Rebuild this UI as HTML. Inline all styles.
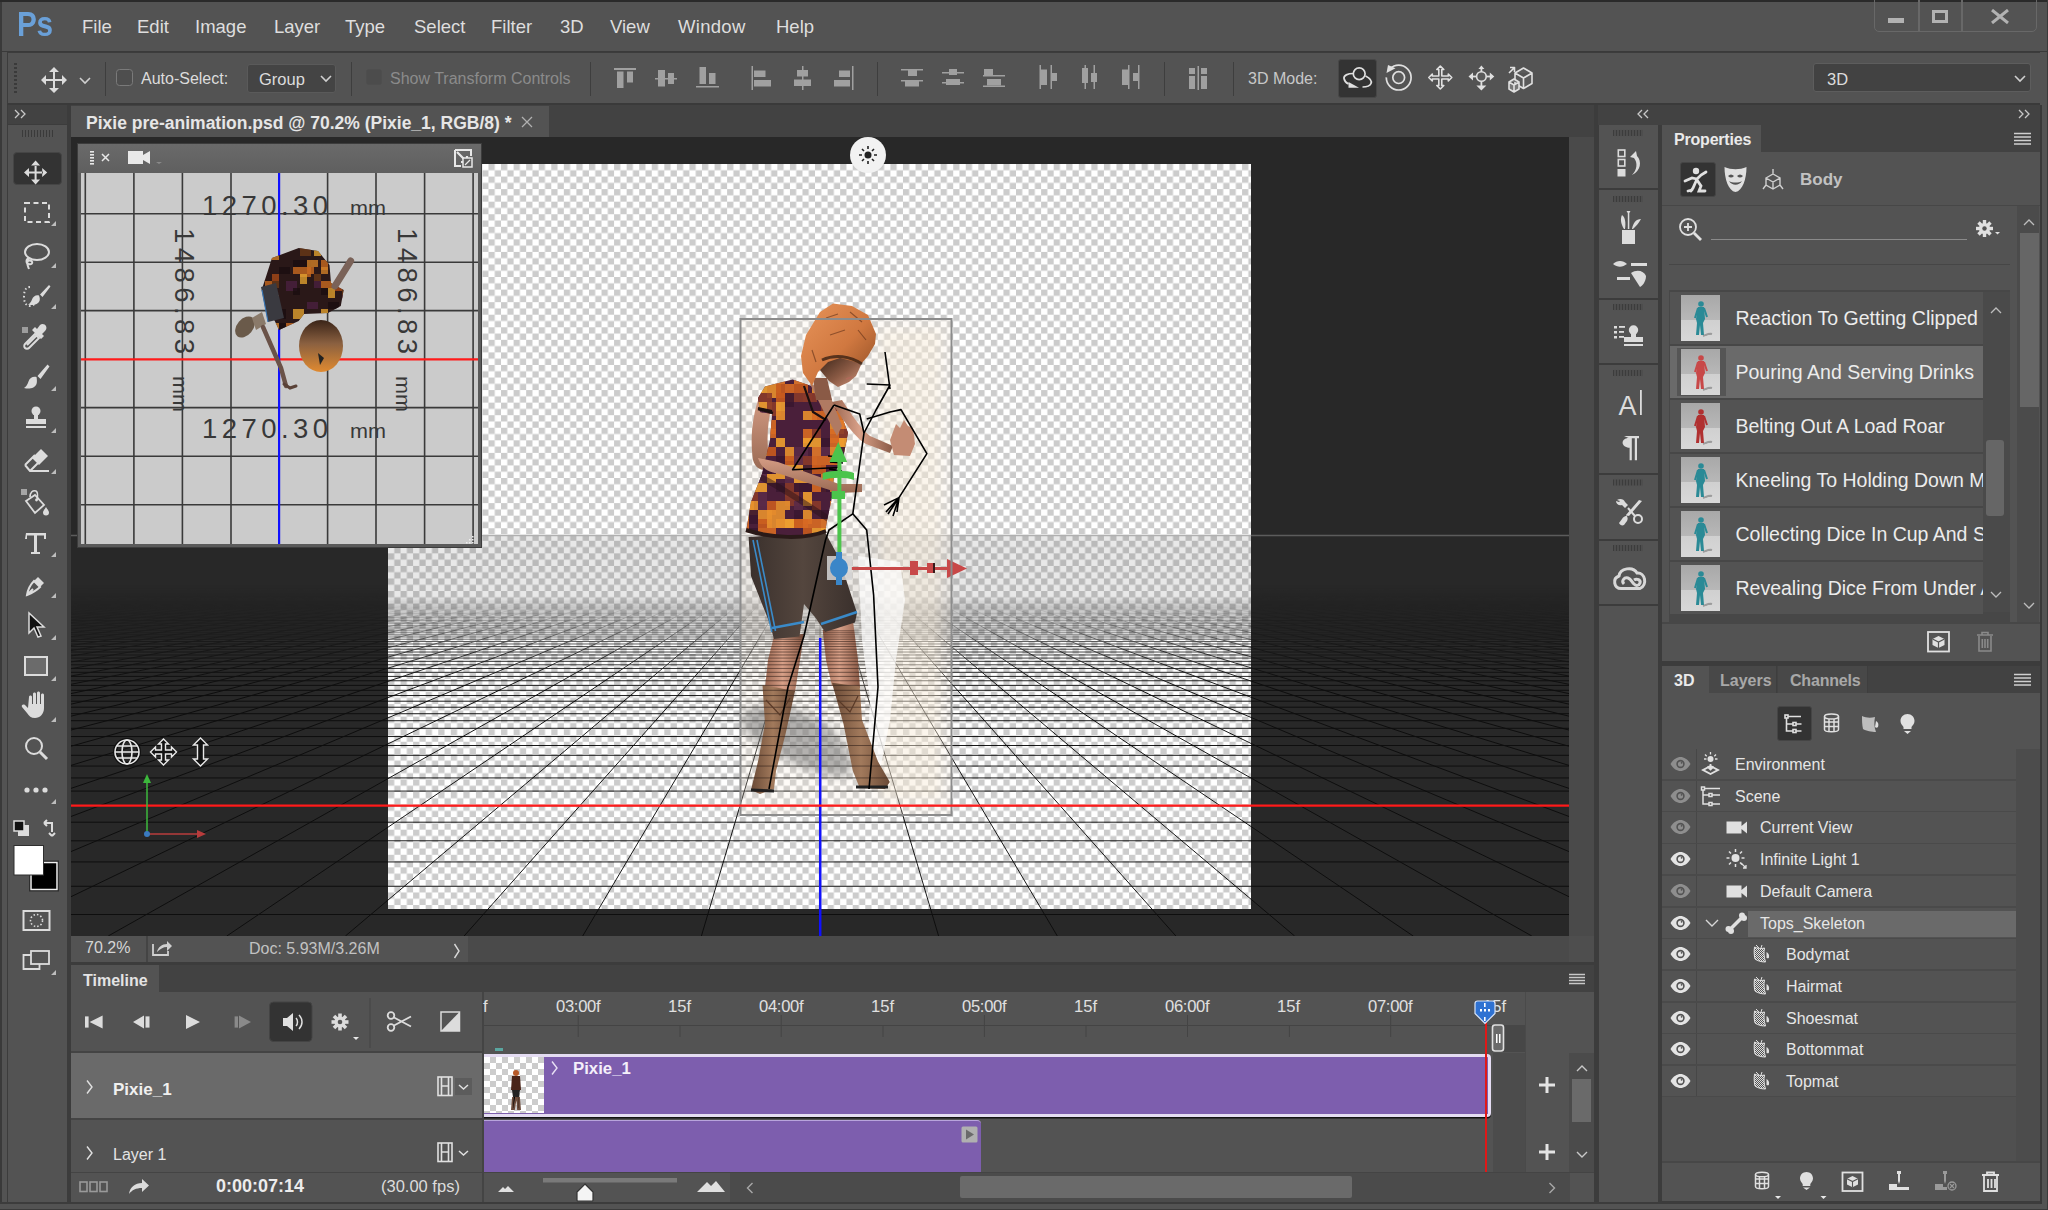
<!DOCTYPE html>
<html><head><meta charset="utf-8">
<style>
*{margin:0;padding:0;box-sizing:border-box}
html,body{width:2048px;height:1210px;overflow:hidden;background:#535353;font-family:"Liberation Sans",sans-serif;color:#dcdcdc}
.a{position:absolute}
.t{position:absolute;white-space:nowrap;line-height:1}
</style></head><body>
<!-- outer frame -->
<div class="a" style="left:0;top:0;width:2048px;height:1210px;background:#535353;border:1px solid #2f2f2f"></div>
<!-- menu bar -->
<div class="a" style="left:0;top:51px;width:2048px;height:1px;background:#3a3a3a"></div>
<!-- options bar -->
<div class="a" id="opt" style="left:7px;top:52px;width:2033px;height:53px;background:#535353;border-top:1px solid #3c3c3c;border-bottom:2px solid #3a3a3a;border-left:1px solid #3c3c3c"></div>
<!-- left toolbox -->
<div class="a" style="left:0;top:105px;width:71px;height:1105px;background:#535353"></div>
<div class="a" style="left:0;top:0;width:1.5px;height:1210px;background:#3a3a3a"></div>
<div class="a" style="left:6.5px;top:105px;width:1.5px;height:1098px;background:#3c3c3c"></div>
<div class="a" style="left:67px;top:105px;width:4px;height:1098px;background:#3c3c3c"></div>
<div class="a" style="left:8px;top:124px;width:59px;height:1px;background:#3c3c3c"></div>
<div class="a" style="left:0;top:1202px;width:2048px;height:1.5px;background:#3c3c3c"></div>
<div class="a" style="left:0;top:1208.5px;width:2048px;height:1.5px;background:#3a3a3a"></div>
<div class="a" style="left:8px;top:105px;width:59px;height:19px;background:#424242"></div>
<!-- doc tab strip -->
<div class="a" style="left:71px;top:105px;width:1524px;height:32px;background:#424242"></div>
<div class="a" style="left:71px;top:106px;width:478px;height:31px;background:#535353"></div>
<!-- canvas area -->
<div class="a" id="canvas" style="left:71px;top:137px;width:1498px;height:799px;background:#282828;overflow:hidden"></div>
<!--SEC3-->
<svg class="a" style="left:71px;top:137px" width="1498" height="799" viewBox="71 137 1498 799">
<defs>
<pattern id="chk" x="388" y="164" width="12.56" height="12.56" patternUnits="userSpaceOnUse">
<rect width="12.56" height="12.56" fill="#ffffff"/><rect x="0" y="0" width="6.28" height="6.28" fill="#cccccc"/><rect x="6.28" y="6.28" width="6.28" height="6.28" fill="#cccccc"/></pattern>
<linearGradient id="fadeD" x1="0" y1="0" x2="0" y2="1" gradientUnits="objectBoundingBox">
<stop offset="0" stop-color="#262626" stop-opacity="1"/><stop offset="0.35" stop-color="#262626" stop-opacity="0.85"/><stop offset="1" stop-color="#262626" stop-opacity="0"/></linearGradient>
<linearGradient id="fadeW" x1="0" y1="0" x2="0" y2="1">
<stop offset="0" stop-color="#000" stop-opacity="0.09"/><stop offset="0.6" stop-color="#000" stop-opacity="0.09"/><stop offset="1" stop-color="#000" stop-opacity="0"/></linearGradient>
<linearGradient id="gmask" gradientUnits="userSpaceOnUse" x1="0" y1="585" x2="0" y2="690">
<stop offset="0" stop-color="#000"/><stop offset="1" stop-color="#fff"/></linearGradient>
<linearGradient id="gmask2" gradientUnits="userSpaceOnUse" x1="0" y1="596" x2="0" y2="690">
<stop offset="0" stop-color="#000"/><stop offset="0.3" stop-color="#707070"/><stop offset="0.6" stop-color="#d0d0d0"/><stop offset="1" stop-color="#fff"/></linearGradient>
<mask id="gm2" maskUnits="userSpaceOnUse" x="71" y="137" width="1498" height="799"><rect x="71" y="137" width="1498" height="799" fill="url(#gmask2)"/></mask>
<mask id="gm" maskUnits="userSpaceOnUse" x="71" y="137" width="1498" height="799"><rect x="71" y="137" width="1498" height="799" fill="url(#gmask)"/></mask>
<clipPath id="cvclip"><rect x="388" y="164" width="863" height="745"/></clipPath>
</defs>
<rect x="71" y="137" width="1498" height="799" fill="#282828"/>
<g mask="url(#gm)"><path d="M71 914.50H1569M71 886.27H1569M71 861.95H1569M71 840.79H1569M71 822.20H1569M71 805.75H1569M71 791.08H1569M71 777.93H1569M71 766.06H1569M71 755.30H1569M71 745.50H1569M71 736.54H1569M71 728.31H1569M71 720.73H1569M71 713.72H1569M71 707.23H1569M71 701.19H1569M71 695.56H1569M71 690.30H1569M71 685.38H1569M71 680.76H1569M71 676.41H1569M71 672.32H1569M71 668.46H1569M71 664.81H1569M71 661.36H1569M71 658.09H1569M71 654.98H1569M71 652.03H1569M71 649.22H1569M71 646.54H1569M71 643.98H1569M71 641.54H1569M71 639.21H1569M71 636.98H1569M71 634.84H1569M71 632.79H1569M71 630.82H1569M71 628.94H1569M71 627.12H1569M71 625.37H1569M71 623.69H1569M71 622.08H1569M71 620.52H1569M71 619.01H1569M71 617.56H1569M71 616.15H1569M71 614.80H1569M71 613.49H1569M71 612.22H1569M71 610.99H1569M71 609.80H1569M71 608.65H1569M71 607.54H1569M71 606.45H1569M71 605.40H1569M71 604.38H1569M71 603.39H1569M71 602.43H1569M71 601.49H1569M71 600.58H1569M71 599.70H1569M71 598.84H1569M71 598.00H1569M71 597.18H1569M71 596.39H1569M71 595.61H1569M71 594.85H1569M71 594.12H1569M71 593.40H1569M71 592.70H1569M71 592.01H1569M71 591.35H1569M71 590.69H1569M71 590.05H1569M71 589.43H1569M71 588.82H1569M71 588.23H1569M71 587.65H1569M71 587.08H1569M71 586.52H1569M71 585.97H1569M71 585.44H1569M71 584.92H1569M71 584.41H1569M71 583.91H1569M71 583.42H1569M71 582.93H1569M71 582.46H1569M71 582.00H1569M71 581.55H1569M71 581.10H1569M71 580.67H1569M71 580.24H1569M71 579.82H1569M71 579.41H1569M71 579.01H1569M71 578.61H1569M71 578.22H1569M71 577.84H1569M71 577.46H1569M71 577.09H1569M71 576.73H1569M71 576.37H1569M71 576.02H1569M71 575.68H1569M71 575.34H1569M71 575.01H1569M71 574.68H1569M71 574.36H1569M71 574.04H1569M71 573.73H1569M71 573.42H1569M71 573.12H1569M71 572.83H1569M71 572.53H1569M71 572.25H1569M71 571.96H1569M71 571.68H1569M71 571.41H1569M71 571.14H1569M71 570.87H1569M71 570.61H1569M71 570.35H1569M71 570.10H1569M71 569.85H1569M71 569.60H1569M71 569.35H1569M71 569.11H1569M71 568.88H1569M71 568.64H1569M71 568.41H1569M71 568.19H1569M71 567.96H1569M71 567.74H1569M71 567.52H1569M71 567.31H1569M71 567.10H1569M71 566.89H1569M71 566.68H1569M71 566.48H1569M71 566.27H1569M71 566.08H1569M71 565.88H1569M71 565.69H1569M71 565.49H1569M71 565.31H1569M71 565.12H1569M71 564.94H1569M71 564.75H1569M71 564.57H1569M71 564.40H1569M71 564.22H1569M71 564.05H1569M71 563.88H1569M71 563.71H1569M71 563.54H1569M71 563.38H1569M71 563.21H1569M71 563.05H1569M71 562.89H1569M71 562.74H1569M71 562.58H1569M71 562.43H1569M71 562.27H1569M71 562.12H1569M71 561.98H1569M71 561.83H1569M71 561.68H1569M71 561.54H1569M71 561.40H1569M71 561.26H1569M71 561.12H1569M71 560.98H1569M71 560.84H1569M71 560.71H1569M71 560.58H1569M71 560.44H1569M71 560.31H1569M71 560.18H1569M71 560.06H1569M71 559.93H1569M71 559.81H1569M71 559.68H1569M71 559.56H1569M71 559.44H1569M71 559.32H1569M71 559.20H1569M71 559.08H1569M71 558.96H1569M71 558.85H1569M71 558.73H1569M71 558.62H1569M71 558.51H1569M71 558.40H1569M71 558.29H1569M71 558.18H1569M71 558.07H1569M71 557.96H1569M71 557.86H1569M71 557.75H1569M71 557.65H1569M71 557.55H1569M71 557.45H1569M71 557.34H1569M71 557.24H1569M71 557.15H1569M71 557.05H1569M71 556.95H1569M71 556.85H1569M71 556.76H1569M71 556.66H1569M71 556.57H1569M71 556.48H1569M71 556.38H1569M71 556.29H1569M71 556.20H1569M71 556.11H1569M71 556.02H1569M71 555.94H1569M71 555.85H1569M71 555.76H1569M71 555.68H1569M71 555.59H1569M71 555.51H1569M71 555.42H1569M71 555.34H1569M71 555.26H1569M71 555.17H1569M71 555.09H1569M71 555.01H1569M71 554.93H1569M71 554.85H1569M71 554.78H1569M71 554.70H1569M71 554.62H1569M71 554.54H1569M71 554.47H1569M71 554.39H1569M71 554.32H1569M71 554.24H1569M71 554.17H1569M71 554.10H1569M71 554.02H1569M71 553.95H1569M71 553.88H1569M71 553.81H1569M71 553.74H1569M71 553.67H1569M71 553.60H1569M71 553.53H1569M71 553.47H1569M71 553.40H1569M71 553.33H1569M71 553.26H1569M71 553.20H1569M71 553.13H1569M71 553.07H1569M71 553.00H1569M71 552.94H1569M71 552.87H1569M71 552.81H1569M71 552.75H1569M71 552.69H1569M71 552.62H1569M71 552.56H1569M71 552.50H1569M71 552.44H1569M71 552.38H1569M71 552.32H1569M71 552.26H1569M71 552.20H1569M71 552.15H1569M71 552.09H1569M71 552.03H1569M71 551.97H1569M71 551.92H1569M71 551.86H1569M71 551.80H1569M71 551.75H1569M71 551.69H1569M71 551.64H1569M71 551.58H1569M71 551.53H1569M71 551.48H1569M71 551.42H1569M71 551.37H1569M71 551.32H1569M71 551.26H1569M71 551.21H1569M71 551.16H1569M71 551.11H1569M71 551.06H1569M71 551.01H1569M71 550.96H1569M71 550.91H1569M71 550.86H1569M71 550.81H1569M71 550.76H1569M71 550.71H1569M71 550.66H1569M71 550.61H1569M71 550.57H1569M71 550.52H1569M71 550.47H1569M71 550.43H1569M71 550.38H1569M71 550.33H1569M71 550.29H1569M71 550.24H1569M71 550.20H1569M71 550.15H1569M71 550.11H1569M71 550.06H1569M71 550.02H1569M71 549.97H1569M71 549.93H1569M71 549.89H1569M71 549.84H1569M71 549.80H1569M71 549.76H1569M71 549.71H1569M71 549.67H1569M71 549.63H1569M71 549.59H1569M71 549.55H1569M71 549.51H1569M71 549.46H1569M71 549.42H1569M71 549.38H1569M71 549.34H1569M71 549.30H1569M71 549.26H1569M71 549.22H1569M71 549.18H1569M71 549.15H1569M71 549.11H1569M71 549.07H1569M71 549.03H1569M71 548.99H1569M71 548.95H1569M71 548.92H1569M71 548.88H1569M71 548.84H1569M71 548.80H1569M71 548.77H1569M71 548.73H1569M71 548.69H1569M71 548.66H1569M71 548.62H1569M71 548.58H1569M71 548.55H1569M71 548.51H1569M71 548.48H1569M71 548.44H1569M71 548.41H1569M71 548.37H1569M71 548.34H1569M71 548.30H1569M71 548.27H1569M71 548.24H1569M71 548.20H1569M71 548.17H1569M71 548.14H1569M71 548.10H1569M71 548.07H1569M71 548.04H1569M71 548.00H1569M71 547.97H1569M71 547.94H1569M71 547.91H1569M71 547.87H1569M71 547.84H1569M71 547.81H1569M71 547.78H1569M71 547.75H1569M71 547.72H1569M71 547.68H1569M71 547.65H1569M71 547.62H1569M820.0 535.6L-18162.2 936M820.0 535.6L-18043.5 936M820.0 535.6L-17924.9 936M820.0 535.6L-17806.2 936M820.0 535.6L-17687.6 936M820.0 535.6L-17569.0 936M820.0 535.6L-17450.3 936M820.0 535.6L-17331.7 936M820.0 535.6L-17213.1 936M820.0 535.6L-17094.4 936M820.0 535.6L-16975.8 936M820.0 535.6L-16857.1 936M820.0 535.6L-16738.5 936M820.0 535.6L-16619.9 936M820.0 535.6L-16501.2 936M820.0 535.6L-16382.6 936M820.0 535.6L-16263.9 936M820.0 535.6L-16145.3 936M820.0 535.6L-16026.7 936M820.0 535.6L-15908.0 936M820.0 535.6L-15789.4 936M820.0 535.6L-15670.8 936M820.0 535.6L-15552.1 936M820.0 535.6L-15433.5 936M820.0 535.6L-15314.8 936M820.0 535.6L-15196.2 936M820.0 535.6L-15077.6 936M820.0 535.6L-14958.9 936M820.0 535.6L-14840.3 936M820.0 535.6L-14721.6 936M820.0 535.6L-14603.0 936M820.0 535.6L-14484.4 936M820.0 535.6L-14365.7 936M820.0 535.6L-14247.1 936M820.0 535.6L-14128.5 936M820.0 535.6L-14009.8 936M820.0 535.6L-13891.2 936M820.0 535.6L-13772.5 936M820.0 535.6L-13653.9 936M820.0 535.6L-13535.3 936M820.0 535.6L-13416.6 936M820.0 535.6L-13298.0 936M820.0 535.6L-13179.3 936M820.0 535.6L-13060.7 936M820.0 535.6L-12942.1 936M820.0 535.6L-12823.4 936M820.0 535.6L-12704.8 936M820.0 535.6L-12586.2 936M820.0 535.6L-12467.5 936M820.0 535.6L-12348.9 936M820.0 535.6L-12230.2 936M820.0 535.6L-12111.6 936M820.0 535.6L-11993.0 936M820.0 535.6L-11874.3 936M820.0 535.6L-11755.7 936M820.0 535.6L-11637.0 936M820.0 535.6L-11518.4 936M820.0 535.6L-11399.8 936M820.0 535.6L-11281.1 936M820.0 535.6L-11162.5 936M820.0 535.6L-11043.9 936M820.0 535.6L-10925.2 936M820.0 535.6L-10806.6 936M820.0 535.6L-10687.9 936M820.0 535.6L-10569.3 936M820.0 535.6L-10450.7 936M820.0 535.6L-10332.0 936M820.0 535.6L-10213.4 936M820.0 535.6L-10094.7 936M820.0 535.6L-9976.1 936M820.0 535.6L-9857.5 936M820.0 535.6L-9738.8 936M820.0 535.6L-9620.2 936M820.0 535.6L-9501.6 936M820.0 535.6L-9382.9 936M820.0 535.6L-9264.3 936M820.0 535.6L-9145.6 936M820.0 535.6L-9027.0 936M820.0 535.6L-8908.4 936M820.0 535.6L-8789.7 936M820.0 535.6L-8671.1 936M820.0 535.6L-8552.4 936M820.0 535.6L-8433.8 936M820.0 535.6L-8315.2 936M820.0 535.6L-8196.5 936M820.0 535.6L-8077.9 936M820.0 535.6L-7959.3 936M820.0 535.6L-7840.6 936M820.0 535.6L-7722.0 936M820.0 535.6L-7603.3 936M820.0 535.6L-7484.7 936M820.0 535.6L-7366.1 936M820.0 535.6L-7247.4 936M820.0 535.6L-7128.8 936M820.0 535.6L-7010.1 936M820.0 535.6L-6891.5 936M820.0 535.6L-6772.9 936M820.0 535.6L-6654.2 936M820.0 535.6L-6535.6 936M820.0 535.6L-6416.9 936M820.0 535.6L-6298.3 936M820.0 535.6L-6179.7 936M820.0 535.6L-6061.0 936M820.0 535.6L-5942.4 936M820.0 535.6L-5823.8 936M820.0 535.6L-5705.1 936M820.0 535.6L-5586.5 936M820.0 535.6L-5467.8 936M820.0 535.6L-5349.2 936M820.0 535.6L-5230.6 936M820.0 535.6L-5111.9 936M820.0 535.6L-4993.3 936M820.0 535.6L-4874.6 936M820.0 535.6L-4756.0 936M820.0 535.6L-4637.4 936M820.0 535.6L-4518.7 936M820.0 535.6L-4400.1 936M820.0 535.6L-4281.5 936M820.0 535.6L-4162.8 936M820.0 535.6L-4044.2 936M820.0 535.6L-3925.5 936M820.0 535.6L-3806.9 936M820.0 535.6L-3688.3 936M820.0 535.6L-3569.6 936M820.0 535.6L-3451.0 936M820.0 535.6L-3332.3 936M820.0 535.6L-3213.7 936M820.0 535.6L-3095.1 936M820.0 535.6L-2976.4 936M820.0 535.6L-2857.8 936M820.0 535.6L-2739.2 936M820.0 535.6L-2620.5 936M820.0 535.6L-2501.9 936M820.0 535.6L-2383.2 936M820.0 535.6L-2264.6 936M820.0 535.6L-2146.0 936M820.0 535.6L-2027.3 936M820.0 535.6L-1908.7 936M820.0 535.6L-1790.0 936M820.0 535.6L-1671.4 936M820.0 535.6L-1552.8 936M820.0 535.6L-1434.1 936M820.0 535.6L-1315.5 936M820.0 535.6L-1196.9 936M820.0 535.6L-1078.2 936M820.0 535.6L-959.6 936M820.0 535.6L-840.9 936M820.0 535.6L-722.3 936M820.0 535.6L-603.7 936M820.0 535.6L-485.0 936M820.0 535.6L-366.4 936M820.0 535.6L-247.7 936M820.0 535.6L-129.1 936M820.0 535.6L-10.5 936M820.0 535.6L108.2 936M820.0 535.6L226.8 936M820.0 535.6L345.4 936M820.0 535.6L464.1 936M820.0 535.6L582.7 936M820.0 535.6L701.4 936M820.0 535.6L820.0 936M820.0 535.6L938.6 936M820.0 535.6L1057.3 936M820.0 535.6L1175.9 936M820.0 535.6L1294.6 936M820.0 535.6L1413.2 936M820.0 535.6L1531.8 936M820.0 535.6L1650.5 936M820.0 535.6L1769.1 936M820.0 535.6L1887.7 936M820.0 535.6L2006.4 936M820.0 535.6L2125.0 936M820.0 535.6L2243.7 936M820.0 535.6L2362.3 936M820.0 535.6L2480.9 936M820.0 535.6L2599.6 936M820.0 535.6L2718.2 936M820.0 535.6L2836.9 936M820.0 535.6L2955.5 936M820.0 535.6L3074.1 936M820.0 535.6L3192.8 936M820.0 535.6L3311.4 936M820.0 535.6L3430.0 936M820.0 535.6L3548.7 936M820.0 535.6L3667.3 936M820.0 535.6L3786.0 936M820.0 535.6L3904.6 936M820.0 535.6L4023.2 936M820.0 535.6L4141.9 936M820.0 535.6L4260.5 936M820.0 535.6L4379.2 936M820.0 535.6L4497.8 936M820.0 535.6L4616.4 936M820.0 535.6L4735.1 936M820.0 535.6L4853.7 936M820.0 535.6L4972.3 936M820.0 535.6L5091.0 936M820.0 535.6L5209.6 936M820.0 535.6L5328.3 936M820.0 535.6L5446.9 936M820.0 535.6L5565.5 936M820.0 535.6L5684.2 936M820.0 535.6L5802.8 936M820.0 535.6L5921.5 936M820.0 535.6L6040.1 936M820.0 535.6L6158.7 936M820.0 535.6L6277.4 936M820.0 535.6L6396.0 936M820.0 535.6L6514.6 936M820.0 535.6L6633.3 936M820.0 535.6L6751.9 936M820.0 535.6L6870.6 936M820.0 535.6L6989.2 936M820.0 535.6L7107.8 936M820.0 535.6L7226.5 936M820.0 535.6L7345.1 936M820.0 535.6L7463.8 936M820.0 535.6L7582.4 936M820.0 535.6L7701.0 936M820.0 535.6L7819.7 936M820.0 535.6L7938.3 936M820.0 535.6L8056.9 936M820.0 535.6L8175.6 936M820.0 535.6L8294.2 936M820.0 535.6L8412.9 936M820.0 535.6L8531.5 936M820.0 535.6L8650.1 936M820.0 535.6L8768.8 936M820.0 535.6L8887.4 936M820.0 535.6L9006.1 936M820.0 535.6L9124.7 936M820.0 535.6L9243.3 936M820.0 535.6L9362.0 936M820.0 535.6L9480.6 936M820.0 535.6L9599.3 936M820.0 535.6L9717.9 936M820.0 535.6L9836.5 936M820.0 535.6L9955.2 936M820.0 535.6L10073.8 936M820.0 535.6L10192.4 936M820.0 535.6L10311.1 936M820.0 535.6L10429.7 936M820.0 535.6L10548.4 936M820.0 535.6L10667.0 936M820.0 535.6L10785.6 936M820.0 535.6L10904.3 936M820.0 535.6L11022.9 936M820.0 535.6L11141.6 936M820.0 535.6L11260.2 936M820.0 535.6L11378.8 936M820.0 535.6L11497.5 936M820.0 535.6L11616.1 936M820.0 535.6L11734.7 936M820.0 535.6L11853.4 936M820.0 535.6L11972.0 936M820.0 535.6L12090.7 936M820.0 535.6L12209.3 936M820.0 535.6L12327.9 936M820.0 535.6L12446.6 936M820.0 535.6L12565.2 936M820.0 535.6L12683.9 936M820.0 535.6L12802.5 936M820.0 535.6L12921.1 936M820.0 535.6L13039.8 936M820.0 535.6L13158.4 936M820.0 535.6L13277.0 936M820.0 535.6L13395.7 936M820.0 535.6L13514.3 936M820.0 535.6L13633.0 936M820.0 535.6L13751.6 936M820.0 535.6L13870.2 936M820.0 535.6L13988.9 936M820.0 535.6L14107.5 936M820.0 535.6L14226.2 936M820.0 535.6L14344.8 936M820.0 535.6L14463.4 936M820.0 535.6L14582.1 936M820.0 535.6L14700.7 936M820.0 535.6L14819.3 936M820.0 535.6L14938.0 936M820.0 535.6L15056.6 936M820.0 535.6L15175.3 936M820.0 535.6L15293.9 936M820.0 535.6L15412.5 936M820.0 535.6L15531.2 936M820.0 535.6L15649.8 936M820.0 535.6L15768.5 936M820.0 535.6L15887.1 936M820.0 535.6L16005.7 936M820.0 535.6L16124.4 936M820.0 535.6L16243.0 936M820.0 535.6L16361.6 936M820.0 535.6L16480.3 936M820.0 535.6L16598.9 936M820.0 535.6L16717.6 936M820.0 535.6L16836.2 936M820.0 535.6L16954.8 936M820.0 535.6L17073.5 936M820.0 535.6L17192.1 936M820.0 535.6L17310.8 936M820.0 535.6L17429.4 936M820.0 535.6L17548.0 936M820.0 535.6L17666.7 936M820.0 535.6L17785.3 936M820.0 535.6L17903.9 936M820.0 535.6L18022.6 936M820.0 535.6L18141.2 936M820.0 535.6L18259.9 936M820.0 535.6L18378.5 936M820.0 535.6L18497.1 936M820.0 535.6L18615.8 936M820.0 535.6L18734.4 936M820.0 535.6L18853.1 936M820.0 535.6L18971.7 936M820.0 535.6L19090.3 936M820.0 535.6L19209.0 936M820.0 535.6L19327.6 936M820.0 535.6L19446.2 936M820.0 535.6L19564.9 936M820.0 535.6L19683.5 936M820.0 535.6L19802.2 936" stroke="#0e0e0e" stroke-width="1" fill="none"/></g>
<rect x="388" y="164" width="863" height="745" fill="url(#chk)"/>
<g clip-path="url(#cvclip)">
<rect x="388" y="535.6" width="863" height="110" fill="url(#fadeW)"/>
<g mask="url(#gm2)"><path d="M71 914.50H1569M71 886.27H1569M71 861.95H1569M71 840.79H1569M71 822.20H1569M71 805.75H1569M71 791.08H1569M71 777.93H1569M71 766.06H1569M71 755.30H1569M71 745.50H1569M71 736.54H1569M71 728.31H1569M71 720.73H1569M71 713.72H1569M71 707.23H1569M71 701.19H1569M71 695.56H1569M71 690.30H1569M71 685.38H1569M71 680.76H1569M71 676.41H1569M71 672.32H1569M71 668.46H1569M71 664.81H1569M71 661.36H1569M71 658.09H1569M71 654.98H1569M71 652.03H1569M71 649.22H1569M71 646.54H1569M71 643.98H1569M71 641.54H1569M71 639.21H1569M71 636.98H1569M71 634.84H1569M71 632.79H1569M71 630.82H1569M71 628.94H1569M71 627.12H1569M71 625.37H1569M71 623.69H1569M71 622.08H1569M71 620.52H1569M71 619.01H1569M71 617.56H1569M71 616.15H1569M71 614.80H1569M71 613.49H1569M71 612.22H1569M71 610.99H1569M71 609.80H1569M71 608.65H1569M71 607.54H1569M71 606.45H1569M71 605.40H1569M71 604.38H1569M71 603.39H1569M71 602.43H1569M71 601.49H1569M71 600.58H1569M71 599.70H1569M71 598.84H1569M71 598.00H1569M71 597.18H1569M71 596.39H1569M71 595.61H1569M71 594.85H1569M71 594.12H1569M71 593.40H1569M71 592.70H1569M71 592.01H1569M71 591.35H1569M71 590.69H1569M71 590.05H1569M71 589.43H1569M71 588.82H1569M71 588.23H1569M71 587.65H1569M71 587.08H1569M71 586.52H1569M71 585.97H1569M71 585.44H1569M71 584.92H1569M71 584.41H1569M71 583.91H1569M71 583.42H1569M71 582.93H1569M71 582.46H1569M71 582.00H1569M71 581.55H1569M71 581.10H1569M71 580.67H1569M71 580.24H1569M71 579.82H1569M71 579.41H1569M71 579.01H1569M71 578.61H1569M71 578.22H1569M71 577.84H1569M71 577.46H1569M71 577.09H1569M71 576.73H1569M71 576.37H1569M71 576.02H1569M71 575.68H1569M71 575.34H1569M71 575.01H1569M71 574.68H1569M71 574.36H1569M71 574.04H1569M71 573.73H1569M71 573.42H1569M71 573.12H1569M71 572.83H1569M71 572.53H1569M71 572.25H1569M71 571.96H1569M71 571.68H1569M71 571.41H1569M71 571.14H1569M71 570.87H1569M71 570.61H1569M71 570.35H1569M71 570.10H1569M71 569.85H1569M71 569.60H1569M71 569.35H1569M71 569.11H1569M71 568.88H1569M71 568.64H1569M71 568.41H1569M71 568.19H1569M71 567.96H1569M71 567.74H1569M71 567.52H1569M71 567.31H1569M71 567.10H1569M71 566.89H1569M71 566.68H1569M71 566.48H1569M71 566.27H1569M71 566.08H1569M71 565.88H1569M71 565.69H1569M71 565.49H1569M71 565.31H1569M71 565.12H1569M71 564.94H1569M71 564.75H1569M71 564.57H1569M71 564.40H1569M71 564.22H1569M71 564.05H1569M71 563.88H1569M71 563.71H1569M71 563.54H1569M71 563.38H1569M71 563.21H1569M71 563.05H1569M71 562.89H1569M71 562.74H1569M71 562.58H1569M71 562.43H1569M71 562.27H1569M71 562.12H1569M71 561.98H1569M71 561.83H1569M71 561.68H1569M71 561.54H1569M71 561.40H1569M71 561.26H1569M71 561.12H1569M71 560.98H1569M71 560.84H1569M71 560.71H1569M71 560.58H1569M71 560.44H1569M71 560.31H1569M71 560.18H1569M71 560.06H1569M71 559.93H1569M71 559.81H1569M71 559.68H1569M71 559.56H1569M71 559.44H1569M71 559.32H1569M71 559.20H1569M71 559.08H1569M71 558.96H1569M71 558.85H1569M71 558.73H1569M71 558.62H1569M71 558.51H1569M71 558.40H1569M71 558.29H1569M71 558.18H1569M71 558.07H1569M71 557.96H1569M71 557.86H1569M71 557.75H1569M71 557.65H1569M71 557.55H1569M71 557.45H1569M71 557.34H1569M71 557.24H1569M71 557.15H1569M71 557.05H1569M71 556.95H1569M71 556.85H1569M71 556.76H1569M71 556.66H1569M71 556.57H1569M71 556.48H1569M71 556.38H1569M71 556.29H1569M71 556.20H1569M71 556.11H1569M71 556.02H1569M71 555.94H1569M71 555.85H1569M71 555.76H1569M71 555.68H1569M71 555.59H1569M71 555.51H1569M71 555.42H1569M71 555.34H1569M71 555.26H1569M71 555.17H1569M71 555.09H1569M71 555.01H1569M71 554.93H1569M71 554.85H1569M71 554.78H1569M71 554.70H1569M71 554.62H1569M71 554.54H1569M71 554.47H1569M71 554.39H1569M71 554.32H1569M71 554.24H1569M71 554.17H1569M71 554.10H1569M71 554.02H1569M71 553.95H1569M71 553.88H1569M71 553.81H1569M71 553.74H1569M71 553.67H1569M71 553.60H1569M71 553.53H1569M71 553.47H1569M71 553.40H1569M71 553.33H1569M71 553.26H1569M71 553.20H1569M71 553.13H1569M71 553.07H1569M71 553.00H1569M71 552.94H1569M71 552.87H1569M71 552.81H1569M71 552.75H1569M71 552.69H1569M71 552.62H1569M71 552.56H1569M71 552.50H1569M71 552.44H1569M71 552.38H1569M71 552.32H1569M71 552.26H1569M71 552.20H1569M71 552.15H1569M71 552.09H1569M71 552.03H1569M71 551.97H1569M71 551.92H1569M71 551.86H1569M71 551.80H1569M71 551.75H1569M71 551.69H1569M71 551.64H1569M71 551.58H1569M71 551.53H1569M71 551.48H1569M71 551.42H1569M71 551.37H1569M71 551.32H1569M71 551.26H1569M71 551.21H1569M71 551.16H1569M71 551.11H1569M71 551.06H1569M71 551.01H1569M71 550.96H1569M71 550.91H1569M71 550.86H1569M71 550.81H1569M71 550.76H1569M71 550.71H1569M71 550.66H1569M71 550.61H1569M71 550.57H1569M71 550.52H1569M71 550.47H1569M71 550.43H1569M71 550.38H1569M71 550.33H1569M71 550.29H1569M71 550.24H1569M71 550.20H1569M71 550.15H1569M71 550.11H1569M71 550.06H1569M71 550.02H1569M71 549.97H1569M71 549.93H1569M71 549.89H1569M71 549.84H1569M71 549.80H1569M71 549.76H1569M71 549.71H1569M71 549.67H1569M71 549.63H1569M71 549.59H1569M71 549.55H1569M71 549.51H1569M71 549.46H1569M71 549.42H1569M71 549.38H1569M71 549.34H1569M71 549.30H1569M71 549.26H1569M71 549.22H1569M71 549.18H1569M71 549.15H1569M71 549.11H1569M71 549.07H1569M71 549.03H1569M71 548.99H1569M71 548.95H1569M71 548.92H1569M71 548.88H1569M71 548.84H1569M71 548.80H1569M71 548.77H1569M71 548.73H1569M71 548.69H1569M71 548.66H1569M71 548.62H1569M71 548.58H1569M71 548.55H1569M71 548.51H1569M71 548.48H1569M71 548.44H1569M71 548.41H1569M71 548.37H1569M71 548.34H1569M71 548.30H1569M71 548.27H1569M71 548.24H1569M71 548.20H1569M71 548.17H1569M71 548.14H1569M71 548.10H1569M71 548.07H1569M71 548.04H1569M71 548.00H1569M71 547.97H1569M71 547.94H1569M71 547.91H1569M71 547.87H1569M71 547.84H1569M71 547.81H1569M71 547.78H1569M71 547.75H1569M71 547.72H1569M71 547.68H1569M71 547.65H1569M71 547.62H1569M820.0 535.6L-18162.2 936M820.0 535.6L-18043.5 936M820.0 535.6L-17924.9 936M820.0 535.6L-17806.2 936M820.0 535.6L-17687.6 936M820.0 535.6L-17569.0 936M820.0 535.6L-17450.3 936M820.0 535.6L-17331.7 936M820.0 535.6L-17213.1 936M820.0 535.6L-17094.4 936M820.0 535.6L-16975.8 936M820.0 535.6L-16857.1 936M820.0 535.6L-16738.5 936M820.0 535.6L-16619.9 936M820.0 535.6L-16501.2 936M820.0 535.6L-16382.6 936M820.0 535.6L-16263.9 936M820.0 535.6L-16145.3 936M820.0 535.6L-16026.7 936M820.0 535.6L-15908.0 936M820.0 535.6L-15789.4 936M820.0 535.6L-15670.8 936M820.0 535.6L-15552.1 936M820.0 535.6L-15433.5 936M820.0 535.6L-15314.8 936M820.0 535.6L-15196.2 936M820.0 535.6L-15077.6 936M820.0 535.6L-14958.9 936M820.0 535.6L-14840.3 936M820.0 535.6L-14721.6 936M820.0 535.6L-14603.0 936M820.0 535.6L-14484.4 936M820.0 535.6L-14365.7 936M820.0 535.6L-14247.1 936M820.0 535.6L-14128.5 936M820.0 535.6L-14009.8 936M820.0 535.6L-13891.2 936M820.0 535.6L-13772.5 936M820.0 535.6L-13653.9 936M820.0 535.6L-13535.3 936M820.0 535.6L-13416.6 936M820.0 535.6L-13298.0 936M820.0 535.6L-13179.3 936M820.0 535.6L-13060.7 936M820.0 535.6L-12942.1 936M820.0 535.6L-12823.4 936M820.0 535.6L-12704.8 936M820.0 535.6L-12586.2 936M820.0 535.6L-12467.5 936M820.0 535.6L-12348.9 936M820.0 535.6L-12230.2 936M820.0 535.6L-12111.6 936M820.0 535.6L-11993.0 936M820.0 535.6L-11874.3 936M820.0 535.6L-11755.7 936M820.0 535.6L-11637.0 936M820.0 535.6L-11518.4 936M820.0 535.6L-11399.8 936M820.0 535.6L-11281.1 936M820.0 535.6L-11162.5 936M820.0 535.6L-11043.9 936M820.0 535.6L-10925.2 936M820.0 535.6L-10806.6 936M820.0 535.6L-10687.9 936M820.0 535.6L-10569.3 936M820.0 535.6L-10450.7 936M820.0 535.6L-10332.0 936M820.0 535.6L-10213.4 936M820.0 535.6L-10094.7 936M820.0 535.6L-9976.1 936M820.0 535.6L-9857.5 936M820.0 535.6L-9738.8 936M820.0 535.6L-9620.2 936M820.0 535.6L-9501.6 936M820.0 535.6L-9382.9 936M820.0 535.6L-9264.3 936M820.0 535.6L-9145.6 936M820.0 535.6L-9027.0 936M820.0 535.6L-8908.4 936M820.0 535.6L-8789.7 936M820.0 535.6L-8671.1 936M820.0 535.6L-8552.4 936M820.0 535.6L-8433.8 936M820.0 535.6L-8315.2 936M820.0 535.6L-8196.5 936M820.0 535.6L-8077.9 936M820.0 535.6L-7959.3 936M820.0 535.6L-7840.6 936M820.0 535.6L-7722.0 936M820.0 535.6L-7603.3 936M820.0 535.6L-7484.7 936M820.0 535.6L-7366.1 936M820.0 535.6L-7247.4 936M820.0 535.6L-7128.8 936M820.0 535.6L-7010.1 936M820.0 535.6L-6891.5 936M820.0 535.6L-6772.9 936M820.0 535.6L-6654.2 936M820.0 535.6L-6535.6 936M820.0 535.6L-6416.9 936M820.0 535.6L-6298.3 936M820.0 535.6L-6179.7 936M820.0 535.6L-6061.0 936M820.0 535.6L-5942.4 936M820.0 535.6L-5823.8 936M820.0 535.6L-5705.1 936M820.0 535.6L-5586.5 936M820.0 535.6L-5467.8 936M820.0 535.6L-5349.2 936M820.0 535.6L-5230.6 936M820.0 535.6L-5111.9 936M820.0 535.6L-4993.3 936M820.0 535.6L-4874.6 936M820.0 535.6L-4756.0 936M820.0 535.6L-4637.4 936M820.0 535.6L-4518.7 936M820.0 535.6L-4400.1 936M820.0 535.6L-4281.5 936M820.0 535.6L-4162.8 936M820.0 535.6L-4044.2 936M820.0 535.6L-3925.5 936M820.0 535.6L-3806.9 936M820.0 535.6L-3688.3 936M820.0 535.6L-3569.6 936M820.0 535.6L-3451.0 936M820.0 535.6L-3332.3 936M820.0 535.6L-3213.7 936M820.0 535.6L-3095.1 936M820.0 535.6L-2976.4 936M820.0 535.6L-2857.8 936M820.0 535.6L-2739.2 936M820.0 535.6L-2620.5 936M820.0 535.6L-2501.9 936M820.0 535.6L-2383.2 936M820.0 535.6L-2264.6 936M820.0 535.6L-2146.0 936M820.0 535.6L-2027.3 936M820.0 535.6L-1908.7 936M820.0 535.6L-1790.0 936M820.0 535.6L-1671.4 936M820.0 535.6L-1552.8 936M820.0 535.6L-1434.1 936M820.0 535.6L-1315.5 936M820.0 535.6L-1196.9 936M820.0 535.6L-1078.2 936M820.0 535.6L-959.6 936M820.0 535.6L-840.9 936M820.0 535.6L-722.3 936M820.0 535.6L-603.7 936M820.0 535.6L-485.0 936M820.0 535.6L-366.4 936M820.0 535.6L-247.7 936M820.0 535.6L-129.1 936M820.0 535.6L-10.5 936M820.0 535.6L108.2 936M820.0 535.6L226.8 936M820.0 535.6L345.4 936M820.0 535.6L464.1 936M820.0 535.6L582.7 936M820.0 535.6L701.4 936M820.0 535.6L820.0 936M820.0 535.6L938.6 936M820.0 535.6L1057.3 936M820.0 535.6L1175.9 936M820.0 535.6L1294.6 936M820.0 535.6L1413.2 936M820.0 535.6L1531.8 936M820.0 535.6L1650.5 936M820.0 535.6L1769.1 936M820.0 535.6L1887.7 936M820.0 535.6L2006.4 936M820.0 535.6L2125.0 936M820.0 535.6L2243.7 936M820.0 535.6L2362.3 936M820.0 535.6L2480.9 936M820.0 535.6L2599.6 936M820.0 535.6L2718.2 936M820.0 535.6L2836.9 936M820.0 535.6L2955.5 936M820.0 535.6L3074.1 936M820.0 535.6L3192.8 936M820.0 535.6L3311.4 936M820.0 535.6L3430.0 936M820.0 535.6L3548.7 936M820.0 535.6L3667.3 936M820.0 535.6L3786.0 936M820.0 535.6L3904.6 936M820.0 535.6L4023.2 936M820.0 535.6L4141.9 936M820.0 535.6L4260.5 936M820.0 535.6L4379.2 936M820.0 535.6L4497.8 936M820.0 535.6L4616.4 936M820.0 535.6L4735.1 936M820.0 535.6L4853.7 936M820.0 535.6L4972.3 936M820.0 535.6L5091.0 936M820.0 535.6L5209.6 936M820.0 535.6L5328.3 936M820.0 535.6L5446.9 936M820.0 535.6L5565.5 936M820.0 535.6L5684.2 936M820.0 535.6L5802.8 936M820.0 535.6L5921.5 936M820.0 535.6L6040.1 936M820.0 535.6L6158.7 936M820.0 535.6L6277.4 936M820.0 535.6L6396.0 936M820.0 535.6L6514.6 936M820.0 535.6L6633.3 936M820.0 535.6L6751.9 936M820.0 535.6L6870.6 936M820.0 535.6L6989.2 936M820.0 535.6L7107.8 936M820.0 535.6L7226.5 936M820.0 535.6L7345.1 936M820.0 535.6L7463.8 936M820.0 535.6L7582.4 936M820.0 535.6L7701.0 936M820.0 535.6L7819.7 936M820.0 535.6L7938.3 936M820.0 535.6L8056.9 936M820.0 535.6L8175.6 936M820.0 535.6L8294.2 936M820.0 535.6L8412.9 936M820.0 535.6L8531.5 936M820.0 535.6L8650.1 936M820.0 535.6L8768.8 936M820.0 535.6L8887.4 936M820.0 535.6L9006.1 936M820.0 535.6L9124.7 936M820.0 535.6L9243.3 936M820.0 535.6L9362.0 936M820.0 535.6L9480.6 936M820.0 535.6L9599.3 936M820.0 535.6L9717.9 936M820.0 535.6L9836.5 936M820.0 535.6L9955.2 936M820.0 535.6L10073.8 936M820.0 535.6L10192.4 936M820.0 535.6L10311.1 936M820.0 535.6L10429.7 936M820.0 535.6L10548.4 936M820.0 535.6L10667.0 936M820.0 535.6L10785.6 936M820.0 535.6L10904.3 936M820.0 535.6L11022.9 936M820.0 535.6L11141.6 936M820.0 535.6L11260.2 936M820.0 535.6L11378.8 936M820.0 535.6L11497.5 936M820.0 535.6L11616.1 936M820.0 535.6L11734.7 936M820.0 535.6L11853.4 936M820.0 535.6L11972.0 936M820.0 535.6L12090.7 936M820.0 535.6L12209.3 936M820.0 535.6L12327.9 936M820.0 535.6L12446.6 936M820.0 535.6L12565.2 936M820.0 535.6L12683.9 936M820.0 535.6L12802.5 936M820.0 535.6L12921.1 936M820.0 535.6L13039.8 936M820.0 535.6L13158.4 936M820.0 535.6L13277.0 936M820.0 535.6L13395.7 936M820.0 535.6L13514.3 936M820.0 535.6L13633.0 936M820.0 535.6L13751.6 936M820.0 535.6L13870.2 936M820.0 535.6L13988.9 936M820.0 535.6L14107.5 936M820.0 535.6L14226.2 936M820.0 535.6L14344.8 936M820.0 535.6L14463.4 936M820.0 535.6L14582.1 936M820.0 535.6L14700.7 936M820.0 535.6L14819.3 936M820.0 535.6L14938.0 936M820.0 535.6L15056.6 936M820.0 535.6L15175.3 936M820.0 535.6L15293.9 936M820.0 535.6L15412.5 936M820.0 535.6L15531.2 936M820.0 535.6L15649.8 936M820.0 535.6L15768.5 936M820.0 535.6L15887.1 936M820.0 535.6L16005.7 936M820.0 535.6L16124.4 936M820.0 535.6L16243.0 936M820.0 535.6L16361.6 936M820.0 535.6L16480.3 936M820.0 535.6L16598.9 936M820.0 535.6L16717.6 936M820.0 535.6L16836.2 936M820.0 535.6L16954.8 936M820.0 535.6L17073.5 936M820.0 535.6L17192.1 936M820.0 535.6L17310.8 936M820.0 535.6L17429.4 936M820.0 535.6L17548.0 936M820.0 535.6L17666.7 936M820.0 535.6L17785.3 936M820.0 535.6L17903.9 936M820.0 535.6L18022.6 936M820.0 535.6L18141.2 936M820.0 535.6L18259.9 936M820.0 535.6L18378.5 936M820.0 535.6L18497.1 936M820.0 535.6L18615.8 936M820.0 535.6L18734.4 936M820.0 535.6L18853.1 936M820.0 535.6L18971.7 936M820.0 535.6L19090.3 936M820.0 535.6L19209.0 936M820.0 535.6L19327.6 936M820.0 535.6L19446.2 936M820.0 535.6L19564.9 936M820.0 535.6L19683.5 936M820.0 535.6L19802.2 936" stroke="#000" stroke-width="1" fill="none" opacity="0.9"/></g>
</g>
<path d="M71 535.6H388 M1251 535.6H1569" stroke="#5c5c5c" stroke-width="1.5"/>
<path d="M388 535.6H1251" stroke="#b0b0b0" stroke-width="1.2"/>
<defs>
<linearGradient id="hairG" x1="0" y1="0" x2="1" y2="1"><stop offset="0" stop-color="#e8945a"/><stop offset="0.55" stop-color="#d07840"/><stop offset="1" stop-color="#8a4a22"/></linearGradient>
<linearGradient id="skinG" x1="0" y1="0" x2="1" y2="0"><stop offset="0" stop-color="#9a6650"/><stop offset="0.45" stop-color="#d8a088"/><stop offset="1" stop-color="#8a5a46"/></linearGradient>
<linearGradient id="skinV" x1="0" y1="0" x2="0" y2="1"><stop offset="0" stop-color="#d49c84"/><stop offset="1" stop-color="#9a6a54"/></linearGradient>
<linearGradient id="bootG" x1="0" y1="0" x2="1" y2="0"><stop offset="0" stop-color="#6a4a36"/><stop offset="0.5" stop-color="#a27a5c"/><stop offset="1" stop-color="#6a4a36"/></linearGradient>
<linearGradient id="shortG" x1="0" y1="0" x2="1" y2="0"><stop offset="0" stop-color="#3a302c"/><stop offset="0.5" stop-color="#54463e"/><stop offset="1" stop-color="#3a302c"/></linearGradient>
<clipPath id="shirtClip"><path d="M765 386.5 L792.6 379.5 L813 386.5 L825 402.7 L839 409.6 L848 432.8 L843.5 456 L834 474.4 L832 497.6 L827 520.7 L825 532 L792.6 538 L746 532 L751 502 L762 474 L770 440 L772 414 L760 412 L758 398 Z"/></clipPath>
<filter id="blur4"><feGaussianBlur stdDeviation="5"/></filter>
<filter id="blur1"><feGaussianBlur stdDeviation="0.6"/></filter>
</defs>
<rect x="740" y="319" width="211" height="496" fill="#f8ecd8" opacity="0.2"/>
<rect x="880" y="330" width="60" height="470" fill="#f8ecd8" opacity="0.35" filter="url(#blur4)"/>
<path d="M858 556 L900 562 L905 600 L896 660 L890 720 L880 770 L866 774 L870 700 L862 640 Z" fill="#ffffff" opacity="0.7" filter="url(#blur1)"/>
<path d="M745 712 C760 700 800 705 830 728 C850 745 858 770 845 776 C820 778 790 762 768 750 C748 738 736 724 745 712 Z" fill="#6a6a6a" opacity="0.5" filter="url(#blur4)"/>
<path d="M774 636 L804 634 L800 660 L795 692 L765 688 L768 660 Z" fill="url(#skinG)"/>
<path d="M822.7 630 L853 621 L858 660 L860 688 L832 686 L826 660 Z" fill="url(#skinG)"/>
<path d="M762.5 685 L795 691 L785.6 733.7 L776 771 L774 789 L760 794 L751 790 L758 761.5 L765 724 Z" fill="url(#bootG)"/>
<path d="M832 682.8 L859.7 686.5 L862 720 L878 761.5 L889.8 782 L885 789 L859.7 788 L852.8 770.7 L843.5 724 Z" fill="url(#bootG)"/>
<path d="M751 790 L774 791 M856 787 L888 787" stroke="#222" stroke-width="3"/>
<clipPath id="legclip"><path d="M774 636 L804 634 L800 660 L795 692 L765 688 L768 660 Z M822.7 630 L853 621 L858 660 L860 688 L832 686 L826 660 Z M762.5 685 L795 691 L785.6 733.7 L776 771 L774 789 L760 794 L751 790 L758 761.5 L765 724 Z M832 682.8 L859.7 686.5 L862 720 L878 761.5 L889.8 782 L885 789 L859.7 788 L852.8 770.7 L843.5 724 Z"/></clipPath>
<g clip-path="url(#legclip)"><path d="M740 791.08H900M740 777.93H900M740 766.06H900M740 755.30H900M740 745.50H900M740 736.54H900M740 728.31H900M740 720.73H900M740 713.72H900M740 707.23H900M740 701.19H900M740 695.56H900M740 690.30H900M740 685.38H900M740 680.76H900M740 676.41H900M740 672.32H900M740 668.46H900M740 664.81H900M740 661.36H900M740 658.09H900M740 654.98H900M740 652.03H900M740 649.22H900M740 646.54H900M740 643.98H900M740 641.54H900M740 639.21H900M740 636.98H900M740 634.84H900M740 632.79H900M740 630.82H900" stroke="#2a1a14" stroke-width="1" opacity="0.55"/></g>
<path d="M766 700 L780 715 L790 698 M838 700 L850 712 L858 696" stroke="#5a3a28" stroke-width="1.2" fill="none"/>
<path d="M748.6 537 L825 532 L839 558 L857 613 L855 622.6 L825 632 L815.7 618 L804 604 L799.5 636.5 L774 639 L769.4 622.6 L751 576 Z" fill="url(#shortG)"/>
<path d="M753 540 L771.8 632 M757 540 L775.5 631" stroke="#3a8ac8" stroke-width="1.6"/>
<path d="M772 628 L804 622 M821 624 L857 612" stroke="#3a8ac8" stroke-width="2.4"/>
<path d="M760 395 C752 415 750 440 753 460 C756 470 764 472 770 468 L769 456 C766 440 768 420 772 404 Z" fill="url(#skinV)"/>
<g clip-path="url(#shirtClip)"><rect x="740" y="375" width="115" height="170" fill="#4a1f3a"/>
<rect x="740" y="375" width="18" height="14" fill="#f0a030" opacity="0.9"/>
<rect x="749" y="375" width="14" height="14" fill="#c85a1e" opacity="0.9"/>
<rect x="758" y="375" width="9" height="9" fill="#5a2a48" opacity="0.9"/>
<rect x="767" y="375" width="9" height="9" fill="#c85a1e" opacity="0.9"/>
<rect x="776" y="375" width="9" height="9" fill="#e0782a" opacity="0.9"/>
<rect x="794" y="375" width="18" height="9" fill="#e0782a" opacity="0.9"/>
<rect x="812" y="375" width="14" height="9" fill="#f0a030" opacity="0.9"/>
<rect x="821" y="375" width="14" height="14" fill="#c85a1e" opacity="0.9"/>
<rect x="839" y="375" width="14" height="9" fill="#5a2a48" opacity="0.9"/>
<rect x="848" y="375" width="9" height="14" fill="#c85a1e" opacity="0.9"/>
<rect x="740" y="384" width="14" height="9" fill="#8a3a2a" opacity="0.9"/>
<rect x="749" y="384" width="14" height="9" fill="#e8902e" opacity="0.9"/>
<rect x="758" y="384" width="9" height="9" fill="#f0a030" opacity="0.9"/>
<rect x="767" y="384" width="14" height="14" fill="#e8902e" opacity="0.9"/>
<rect x="776" y="384" width="9" height="14" fill="#c85a1e" opacity="0.9"/>
<rect x="785" y="384" width="9" height="9" fill="#d86a24" opacity="0.9"/>
<rect x="794" y="384" width="14" height="9" fill="#c85a1e" opacity="0.9"/>
<rect x="812" y="384" width="9" height="9" fill="#e8902e" opacity="0.9"/>
<rect x="830" y="384" width="9" height="14" fill="#c85a1e" opacity="0.9"/>
<rect x="758" y="393" width="14" height="9" fill="#8a3a2a" opacity="0.9"/>
<rect x="776" y="393" width="18" height="9" fill="#c85a1e" opacity="0.9"/>
<rect x="785" y="393" width="9" height="14" fill="#3a1630" opacity="0.9"/>
<rect x="794" y="393" width="18" height="9" fill="#8a3a2a" opacity="0.9"/>
<rect x="803" y="393" width="14" height="9" fill="#8a3a2a" opacity="0.9"/>
<rect x="830" y="393" width="14" height="14" fill="#8a3a2a" opacity="0.9"/>
<rect x="740" y="402" width="9" height="9" fill="#f0a030" opacity="0.9"/>
<rect x="758" y="402" width="14" height="9" fill="#f0a030" opacity="0.9"/>
<rect x="767" y="402" width="14" height="14" fill="#8a3a2a" opacity="0.9"/>
<rect x="776" y="402" width="9" height="9" fill="#f0a030" opacity="0.9"/>
<rect x="821" y="402" width="18" height="9" fill="#8a3a2a" opacity="0.9"/>
<rect x="830" y="402" width="9" height="9" fill="#8a3a2a" opacity="0.9"/>
<rect x="839" y="402" width="18" height="9" fill="#5a2a48" opacity="0.9"/>
<rect x="848" y="402" width="9" height="9" fill="#e0782a" opacity="0.9"/>
<rect x="740" y="411" width="14" height="14" fill="#c85a1e" opacity="0.9"/>
<rect x="749" y="411" width="18" height="9" fill="#5a2a48" opacity="0.9"/>
<rect x="776" y="411" width="9" height="9" fill="#e8902e" opacity="0.9"/>
<rect x="803" y="411" width="14" height="9" fill="#e8902e" opacity="0.9"/>
<rect x="812" y="411" width="14" height="9" fill="#d86a24" opacity="0.9"/>
<rect x="830" y="411" width="9" height="14" fill="#e0782a" opacity="0.9"/>
<rect x="839" y="411" width="14" height="14" fill="#e0782a" opacity="0.9"/>
<rect x="749" y="420" width="9" height="9" fill="#d86a24" opacity="0.9"/>
<rect x="767" y="420" width="9" height="14" fill="#d86a24" opacity="0.9"/>
<rect x="830" y="420" width="14" height="14" fill="#e8902e" opacity="0.9"/>
<rect x="839" y="420" width="14" height="9" fill="#e0782a" opacity="0.9"/>
<rect x="848" y="420" width="18" height="14" fill="#d86a24" opacity="0.9"/>
<rect x="758" y="429" width="9" height="9" fill="#5a2a48" opacity="0.9"/>
<rect x="767" y="429" width="9" height="9" fill="#d86a24" opacity="0.9"/>
<rect x="803" y="429" width="9" height="14" fill="#d86a24" opacity="0.9"/>
<rect x="812" y="429" width="9" height="9" fill="#8a3a2a" opacity="0.9"/>
<rect x="830" y="429" width="9" height="14" fill="#d86a24" opacity="0.9"/>
<rect x="839" y="429" width="9" height="14" fill="#8a3a2a" opacity="0.9"/>
<rect x="848" y="429" width="9" height="9" fill="#f0a030" opacity="0.9"/>
<rect x="740" y="438" width="9" height="14" fill="#e8902e" opacity="0.9"/>
<rect x="776" y="438" width="9" height="9" fill="#f0a030" opacity="0.9"/>
<rect x="803" y="438" width="18" height="9" fill="#f0a030" opacity="0.9"/>
<rect x="821" y="438" width="9" height="9" fill="#3a1630" opacity="0.9"/>
<rect x="830" y="438" width="14" height="14" fill="#d86a24" opacity="0.9"/>
<rect x="839" y="438" width="9" height="14" fill="#f0a030" opacity="0.9"/>
<rect x="848" y="438" width="18" height="14" fill="#e8902e" opacity="0.9"/>
<rect x="740" y="447" width="9" height="9" fill="#f0a030" opacity="0.9"/>
<rect x="758" y="447" width="9" height="9" fill="#f0a030" opacity="0.9"/>
<rect x="767" y="447" width="9" height="9" fill="#c85a1e" opacity="0.9"/>
<rect x="785" y="447" width="9" height="14" fill="#e8902e" opacity="0.9"/>
<rect x="794" y="447" width="14" height="9" fill="#5a2a48" opacity="0.9"/>
<rect x="812" y="447" width="9" height="9" fill="#e0782a" opacity="0.9"/>
<rect x="821" y="447" width="14" height="9" fill="#5a2a48" opacity="0.9"/>
<rect x="830" y="447" width="9" height="14" fill="#e8902e" opacity="0.9"/>
<rect x="839" y="447" width="9" height="9" fill="#3a1630" opacity="0.9"/>
<rect x="848" y="447" width="18" height="9" fill="#c85a1e" opacity="0.9"/>
<rect x="740" y="456" width="18" height="9" fill="#5a2a48" opacity="0.9"/>
<rect x="749" y="456" width="9" height="9" fill="#3a1630" opacity="0.9"/>
<rect x="776" y="456" width="9" height="9" fill="#3a1630" opacity="0.9"/>
<rect x="785" y="456" width="18" height="9" fill="#c85a1e" opacity="0.9"/>
<rect x="794" y="456" width="9" height="14" fill="#5a2a48" opacity="0.9"/>
<rect x="803" y="456" width="14" height="9" fill="#8a3a2a" opacity="0.9"/>
<rect x="812" y="456" width="9" height="14" fill="#d86a24" opacity="0.9"/>
<rect x="821" y="456" width="18" height="9" fill="#d86a24" opacity="0.9"/>
<rect x="839" y="456" width="9" height="9" fill="#3a1630" opacity="0.9"/>
<rect x="758" y="465" width="14" height="9" fill="#3a1630" opacity="0.9"/>
<rect x="776" y="465" width="18" height="14" fill="#f0a030" opacity="0.9"/>
<rect x="794" y="465" width="18" height="14" fill="#f0a030" opacity="0.9"/>
<rect x="803" y="465" width="9" height="14" fill="#3a1630" opacity="0.9"/>
<rect x="812" y="465" width="14" height="9" fill="#c85a1e" opacity="0.9"/>
<rect x="839" y="465" width="9" height="9" fill="#5a2a48" opacity="0.9"/>
<rect x="740" y="474" width="18" height="9" fill="#d86a24" opacity="0.9"/>
<rect x="758" y="474" width="9" height="9" fill="#5a2a48" opacity="0.9"/>
<rect x="767" y="474" width="9" height="9" fill="#f0a030" opacity="0.9"/>
<rect x="785" y="474" width="14" height="9" fill="#5a2a48" opacity="0.9"/>
<rect x="794" y="474" width="14" height="9" fill="#f0a030" opacity="0.9"/>
<rect x="821" y="474" width="9" height="14" fill="#e0782a" opacity="0.9"/>
<rect x="830" y="474" width="9" height="14" fill="#e8902e" opacity="0.9"/>
<rect x="848" y="474" width="18" height="14" fill="#e8902e" opacity="0.9"/>
<rect x="740" y="483" width="9" height="9" fill="#5a2a48" opacity="0.9"/>
<rect x="749" y="483" width="18" height="9" fill="#f0a030" opacity="0.9"/>
<rect x="776" y="483" width="18" height="9" fill="#3a1630" opacity="0.9"/>
<rect x="785" y="483" width="14" height="14" fill="#8a3a2a" opacity="0.9"/>
<rect x="794" y="483" width="9" height="9" fill="#3a1630" opacity="0.9"/>
<rect x="803" y="483" width="18" height="9" fill="#3a1630" opacity="0.9"/>
<rect x="812" y="483" width="14" height="9" fill="#d86a24" opacity="0.9"/>
<rect x="821" y="483" width="9" height="9" fill="#3a1630" opacity="0.9"/>
<rect x="830" y="483" width="18" height="9" fill="#d86a24" opacity="0.9"/>
<rect x="839" y="483" width="9" height="14" fill="#5a2a48" opacity="0.9"/>
<rect x="740" y="492" width="9" height="9" fill="#c85a1e" opacity="0.9"/>
<rect x="749" y="492" width="9" height="9" fill="#8a3a2a" opacity="0.9"/>
<rect x="758" y="492" width="9" height="14" fill="#5a2a48" opacity="0.9"/>
<rect x="785" y="492" width="14" height="14" fill="#8a3a2a" opacity="0.9"/>
<rect x="803" y="492" width="9" height="14" fill="#f0a030" opacity="0.9"/>
<rect x="848" y="492" width="9" height="9" fill="#e0782a" opacity="0.9"/>
<rect x="740" y="501" width="14" height="9" fill="#f0a030" opacity="0.9"/>
<rect x="749" y="501" width="9" height="14" fill="#e8902e" opacity="0.9"/>
<rect x="758" y="501" width="18" height="9" fill="#5a2a48" opacity="0.9"/>
<rect x="767" y="501" width="9" height="14" fill="#c85a1e" opacity="0.9"/>
<rect x="776" y="501" width="14" height="9" fill="#e8902e" opacity="0.9"/>
<rect x="794" y="501" width="9" height="14" fill="#5a2a48" opacity="0.9"/>
<rect x="812" y="501" width="9" height="9" fill="#8a3a2a" opacity="0.9"/>
<rect x="830" y="501" width="9" height="9" fill="#e0782a" opacity="0.9"/>
<rect x="839" y="501" width="14" height="14" fill="#d86a24" opacity="0.9"/>
<rect x="740" y="510" width="9" height="9" fill="#f0a030" opacity="0.9"/>
<rect x="749" y="510" width="9" height="14" fill="#3a1630" opacity="0.9"/>
<rect x="758" y="510" width="14" height="14" fill="#e8902e" opacity="0.9"/>
<rect x="767" y="510" width="18" height="9" fill="#e8902e" opacity="0.9"/>
<rect x="794" y="510" width="9" height="9" fill="#3a1630" opacity="0.9"/>
<rect x="803" y="510" width="9" height="14" fill="#e8902e" opacity="0.9"/>
<rect x="821" y="510" width="18" height="9" fill="#3a1630" opacity="0.9"/>
<rect x="848" y="510" width="9" height="14" fill="#c85a1e" opacity="0.9"/>
<rect x="740" y="519" width="9" height="14" fill="#d86a24" opacity="0.9"/>
<rect x="758" y="519" width="14" height="9" fill="#c85a1e" opacity="0.9"/>
<rect x="767" y="519" width="18" height="9" fill="#e8902e" opacity="0.9"/>
<rect x="776" y="519" width="18" height="9" fill="#e8902e" opacity="0.9"/>
<rect x="785" y="519" width="18" height="9" fill="#f0a030" opacity="0.9"/>
<rect x="794" y="519" width="14" height="9" fill="#c85a1e" opacity="0.9"/>
<rect x="803" y="519" width="18" height="9" fill="#d86a24" opacity="0.9"/>
<rect x="821" y="519" width="14" height="9" fill="#e0782a" opacity="0.9"/>
<rect x="830" y="519" width="18" height="14" fill="#8a3a2a" opacity="0.9"/>
<rect x="839" y="519" width="14" height="9" fill="#8a3a2a" opacity="0.9"/>
<rect x="848" y="519" width="14" height="14" fill="#e0782a" opacity="0.9"/>
<rect x="749" y="528" width="18" height="14" fill="#3a1630" opacity="0.9"/>
<rect x="758" y="528" width="18" height="9" fill="#d86a24" opacity="0.9"/>
<rect x="803" y="528" width="9" height="14" fill="#c85a1e" opacity="0.9"/>
<rect x="812" y="528" width="14" height="9" fill="#f0a030" opacity="0.9"/>
<rect x="821" y="528" width="9" height="9" fill="#f0a030" opacity="0.9"/>
<rect x="830" y="528" width="14" height="9" fill="#3a1630" opacity="0.9"/>
<rect x="740" y="537" width="14" height="9" fill="#5a2a48" opacity="0.9"/>
<rect x="749" y="537" width="9" height="9" fill="#8a3a2a" opacity="0.9"/>
<rect x="767" y="537" width="9" height="9" fill="#e8902e" opacity="0.9"/>
<rect x="794" y="537" width="9" height="9" fill="#f0a030" opacity="0.9"/>
<rect x="803" y="537" width="9" height="9" fill="#d86a24" opacity="0.9"/>
<rect x="812" y="537" width="9" height="9" fill="#3a1630" opacity="0.9"/>
<rect x="830" y="537" width="9" height="9" fill="#8a3a2a" opacity="0.9"/>
<rect x="839" y="537" width="18" height="9" fill="#e0782a" opacity="0.9"/>
<rect x="848" y="537" width="9" height="14" fill="#d86a24" opacity="0.9"/>
<path d="M745 470 C770 480 800 500 830 520" stroke="#2a1218" stroke-width="6" opacity="0.5" fill="none"/>
</g>
<path d="M746 530 C770 538 805 540 826 531" stroke="#2a1a18" stroke-width="4" fill="none"/>
<path d="M810 384 L828 390 L842 426 L837 436 L824 412 Z" fill="#b07a62"/>
<path d="M758 409 L773 413" stroke="#1a1010" stroke-width="2.5"/>
<path d="M758 408 L772 411 M804 386 L813 412 L826 420" stroke="#1a1010" stroke-width="2.2" fill="none"/>
<path d="M758 458 C762 470 770 472 780 474 L839 493 L862 492 L862 484 L839 484 L778 462 Z" fill="url(#skinV)"/>
<path d="M813 378 L827 378 L832 400 L816 400 Z" fill="#8a5a46"/>
<path d="M832 402 C842 420 856 438 866 444 L890 453 L893 446 L870 436 C860 428 850 412 842 400 Z" fill="url(#skinG)"/>
<path d="M890 440 L896 424 L900 428 L904 420 L908 426 L913 428 L915 444 L910 456 L894 455 Z" fill="#c48c74"/>
<linearGradient id="faceG" x1="0" y1="0" x2="1" y2="1"><stop offset="0" stop-color="#3a2418"/><stop offset="0.55" stop-color="#8a5a44"/><stop offset="1" stop-color="#d4967c"/></linearGradient>
<path d="M822 358 L852 356 L861 365 L856 376 L849 382 L838 387 L829 381 L820 370 Z" fill="url(#faceG)"/>
<path d="M846 379 L852 377" stroke="#b06a5a" stroke-width="1.5"/>
<path d="M820 312 L833 303.5 L852 306 L868 315 L876 334 L875 344 L868 356 L861 364 L852 361 L840 358 L828 362 L818 372 L812 386 L803 373 L801 356 L806 335 Z" fill="url(#hairG)"/>
<path d="M822 360 C835 354 850 356 862 364" stroke="#3a2214" stroke-width="3" fill="none" opacity="0.8"/>
<path d="M826 318 L838 314 M850 312 L862 322 M830 335 L845 330 M812 350 L816 362 M858 330 L866 340" stroke="#4a2210" stroke-width="1.2" opacity="0.5"/>
<g stroke="#000" stroke-width="1.6" fill="none" stroke-linejoin="round">
<path d="M885 352 L890 389 M866.7 384 L890 385 L876 410 L864 433 L852.8 513.8 L829 530 L825.5 540 L804 636 L788 687 L769 789"/>
<path d="M834 405 L859.7 414 L864 433 M834 405 L792.6 469.8 L839 467.5 M828 456 L842 457 M830 462 L843 463 M829 469 L842 471"/>
<path d="M866.7 419 L890 412 L901 409.6 L926.9 453.6 L899 497.6 L886 512 M899 497.6 L884 505 M899 497.6 L888 514 M899 497.6 L893 516 M899 497.6 L897 512"/>
<path d="M852.8 513.8 L866.7 530 L873.6 594.8 L878 687 L869 789"/>
</g>
<g fill="#4cc44c"><path d="M838.3 442 L829.4 462 L847.2 462 Z"/><rect x="837.4" y="460" width="4" height="92"/><path d="M822.7 473 C832 470 846 470 854 473 L854 480 C846 477 832 477 822.7 480 Z"/><rect x="831.6" y="491" width="13.4" height="8"/></g>
<g fill="#c84848"><rect x="851" y="567" width="96" height="3"/><rect x="910" y="561" width="8" height="14"/><rect x="927" y="563" width="7" height="10"/><rect x="933" y="563" width="2" height="10" fill="#3a1a1a"/><path d="M947 559 L967 568.5 L947 578 Z"/></g>
<rect x="827" y="556" width="25" height="24" fill="#d6d6d6" opacity="0.85"/>
<g fill="#3a86c8"><rect x="836" y="552" width="6" height="33"/><ellipse cx="839" cy="568" rx="9" ry="10"/></g>
<rect x="740.5" y="319" width="211" height="496" fill="none" stroke="#8c8c8c" stroke-width="2"/>
<path d="M820.2 638 V936" stroke="#1010ff" stroke-width="2.5"/>
<path d="M71 805.7H1569" stroke="#ff1a1a" stroke-width="2.2"/>
</svg>
<!--/SEC3-->
<!--SEC4-->
<!-- ===== FLOATING CAMERA WINDOW ===== -->
<div class="a" style="left:77px;top:143px;width:405px;height:405px;background:#5a5a5a;border:1px solid #3c3c3c"></div>
<div class="a" style="left:78px;top:144px;width:403px;height:29px;background:linear-gradient(#6a6a6a,#5f5f5f)"></div>
<svg class="a" style="left:77px;top:143px" width="405" height="405" viewBox="77 143 405 405">
<rect x="81" y="173" width="397" height="371" fill="#cbcbcb"/>
<g stroke="#3a3a3a" stroke-width="1.6" fill="none">
<path d="M85.3 173V544 M133.9 173V544 M182.4 173V544 M231 173V544 M327.6 173V544 M376 173V544 M424.6 173V544 M473.1 173V544"/>
<path d="M81 213.8H478 M81 262.3H478 M81 310.6H478 M81 407.6H478 M81 456.2H478 M81 504.7H478"/>
</g>
<g font-family="Liberation Sans" fill="#383838" font-size="27.5">
<text x="202" y="215" textLength="126" lengthAdjust="spacing">1270.30</text>
<text x="350" y="215" font-size="20" textLength="36" lengthAdjust="spacingAndGlyphs">mm</text>
<text x="202" y="438" textLength="126" lengthAdjust="spacing">1270.30</text>
<text x="350" y="438" font-size="20" textLength="36" lengthAdjust="spacingAndGlyphs">mm</text>
<g transform="translate(175 228) rotate(90)"><text x="0" y="0" textLength="126" lengthAdjust="spacing">1486.83</text><text x="148" y="2" font-size="20" textLength="36" lengthAdjust="spacingAndGlyphs">mm</text></g>
<g transform="translate(398 228) rotate(90)"><text x="0" y="0" textLength="126" lengthAdjust="spacing">1486.83</text><text x="148" y="2" font-size="20" textLength="36" lengthAdjust="spacingAndGlyphs">mm</text></g>
</g>
<path d="M81 359.3H478" stroke="#ff1a1a" stroke-width="2.2"/>
<path d="M279.1 173V544" stroke="#1010ff" stroke-width="2.2"/>
<!-- top view figure -->
<defs><clipPath id="tvshirt"><path d="M262 289 L272 258 L298.7 248 L318 251 L329.5 265 L331 283 L343.6 290 L340.8 306 L328 313 L304 314 L298.7 321 L279 330 L274.8 321 L266 309 Z"/></clipPath>
<linearGradient id="tvhair" x1="0" y1="0" x2="0" y2="1"><stop offset="0" stop-color="#3a2418"/><stop offset="0.45" stop-color="#8a6040"/><stop offset="1" stop-color="#e08a30"/></linearGradient></defs>
<ellipse cx="245" cy="327" rx="12" ry="8" transform="rotate(-50 245 327)" fill="#6a5a4a"/>
<path d="M252 318 L262 312 L266 324 L256 330 Z" fill="#8a7a6a"/>
<path d="M262 289 L272 258 L298.7 248 L318 251 L329.5 265 L331 283 L343.6 290 L340.8 306 L328 313 L304 314 L298.7 321 L279 330 L274.8 321 L266 309 Z" fill="#2a1818"/>
<g clip-path="url(#tvshirt)"><rect x="300" y="246" width="11" height="10" fill="#6a3a18" opacity="0.8"/><rect x="314" y="246" width="7" height="10" fill="#e0a030" opacity="0.8"/><rect x="321" y="246" width="11" height="7" fill="#a84a18" opacity="0.8"/><rect x="265" y="253" width="7" height="7" fill="#c86a20" opacity="0.8"/><rect x="272" y="253" width="7" height="7" fill="#d08028" opacity="0.8"/><rect x="335" y="253" width="11" height="7" fill="#6a3a18" opacity="0.8"/><rect x="342" y="253" width="7" height="10" fill="#c86a20" opacity="0.8"/><rect x="258" y="260" width="7" height="10" fill="#c86a20" opacity="0.8"/><rect x="293" y="260" width="7" height="7" fill="#1a0e10" opacity="0.8"/><rect x="300" y="260" width="11" height="10" fill="#1a0e10" opacity="0.8"/><rect x="307" y="260" width="11" height="7" fill="#d08028" opacity="0.8"/><rect x="321" y="260" width="7" height="10" fill="#c86a20" opacity="0.8"/><rect x="342" y="260" width="7" height="7" fill="#c86a20" opacity="0.8"/><rect x="258" y="267" width="7" height="7" fill="#6a3a18" opacity="0.8"/><rect x="279" y="267" width="11" height="7" fill="#1a0e10" opacity="0.8"/><rect x="293" y="267" width="7" height="7" fill="#c86a20" opacity="0.8"/><rect x="300" y="267" width="11" height="10" fill="#c86a20" opacity="0.8"/><rect x="307" y="267" width="7" height="7" fill="#c86a20" opacity="0.8"/><rect x="321" y="267" width="7" height="7" fill="#d08028" opacity="0.8"/><rect x="258" y="274" width="7" height="7" fill="#c86a20" opacity="0.8"/><rect x="272" y="274" width="7" height="7" fill="#a84a18" opacity="0.8"/><rect x="300" y="274" width="7" height="10" fill="#e0a030" opacity="0.8"/><rect x="314" y="274" width="7" height="7" fill="#6a3a18" opacity="0.8"/><rect x="265" y="281" width="7" height="7" fill="#c86a20" opacity="0.8"/><rect x="272" y="281" width="7" height="7" fill="#6a3a18" opacity="0.8"/><rect x="286" y="281" width="11" height="10" fill="#4a2040" opacity="0.8"/><rect x="314" y="281" width="7" height="7" fill="#4a2040" opacity="0.8"/><rect x="321" y="281" width="7" height="7" fill="#c86a20" opacity="0.8"/><rect x="328" y="281" width="7" height="7" fill="#c86a20" opacity="0.8"/><rect x="335" y="281" width="7" height="10" fill="#a84a18" opacity="0.8"/><rect x="258" y="288" width="7" height="7" fill="#1a0e10" opacity="0.8"/><rect x="293" y="288" width="7" height="7" fill="#1a0e10" opacity="0.8"/><rect x="321" y="288" width="11" height="7" fill="#1a0e10" opacity="0.8"/><rect x="328" y="288" width="7" height="10" fill="#e0a030" opacity="0.8"/><rect x="342" y="288" width="11" height="10" fill="#6a3a18" opacity="0.8"/><rect x="258" y="295" width="11" height="7" fill="#d08028" opacity="0.8"/><rect x="272" y="295" width="7" height="10" fill="#c86a20" opacity="0.8"/><rect x="342" y="295" width="11" height="7" fill="#4a2040" opacity="0.8"/><rect x="307" y="302" width="11" height="7" fill="#4a2040" opacity="0.8"/><rect x="328" y="302" width="11" height="7" fill="#1a0e10" opacity="0.8"/><rect x="272" y="309" width="7" height="7" fill="#a84a18" opacity="0.8"/><rect x="279" y="309" width="7" height="10" fill="#1a0e10" opacity="0.8"/><rect x="293" y="309" width="11" height="10" fill="#e0a030" opacity="0.8"/><rect x="321" y="309" width="7" height="10" fill="#e0a030" opacity="0.8"/><rect x="335" y="309" width="7" height="7" fill="#1a0e10" opacity="0.8"/><rect x="342" y="309" width="7" height="7" fill="#4a2040" opacity="0.8"/><rect x="265" y="316" width="7" height="10" fill="#e0a030" opacity="0.8"/><rect x="321" y="316" width="7" height="10" fill="#d08028" opacity="0.8"/><rect x="342" y="316" width="7" height="10" fill="#6a3a18" opacity="0.8"/><rect x="265" y="323" width="7" height="10" fill="#1a0e10" opacity="0.8"/><rect x="272" y="323" width="7" height="7" fill="#d08028" opacity="0.8"/><rect x="279" y="323" width="7" height="7" fill="#1a0e10" opacity="0.8"/><rect x="286" y="323" width="11" height="10" fill="#c86a20" opacity="0.8"/><rect x="300" y="323" width="7" height="10" fill="#e0a030" opacity="0.8"/><rect x="328" y="323" width="7" height="10" fill="#d08028" opacity="0.8"/><rect x="335" y="323" width="11" height="7" fill="#1a0e10" opacity="0.8"/><rect x="265" y="330" width="7" height="10" fill="#e0a030" opacity="0.8"/><rect x="279" y="330" width="7" height="10" fill="#a84a18" opacity="0.8"/><rect x="328" y="330" width="11" height="7" fill="#e0a030" opacity="0.8"/><rect x="335" y="330" width="7" height="7" fill="#4a2040" opacity="0.8"/></g>
<path d="M261 287 L276 283 L284 318 L268 322 Z" fill="#3a3a40"/>
<path d="M262 290 L268 322" stroke="#3a78b8" stroke-width="1.2"/>
<path d="M350.6 261 L335 286" stroke="#7a6258" stroke-width="7" stroke-linecap="round"/>
<path d="M263 327 L281 368 L286 386" stroke="#6a5248" stroke-width="4.5" fill="none" stroke-linecap="round"/>
<path d="M284 384 L290 388 L296 386" stroke="#5a4238" stroke-width="3" fill="none" stroke-linecap="round"/>
<ellipse cx="321" cy="346" rx="22" ry="26" fill="url(#tvhair)"/>
<path d="M318 353 L324 358 L320 365 Z" fill="#222"/>
<!-- resize dots -->
<g fill="#eeeeee"><rect x="472" y="536" width="1.5" height="1.5"/><rect x="469" y="539" width="1.5" height="1.5"/><rect x="472" y="539" width="1.5" height="1.5"/><rect x="466" y="542" width="1.5" height="1.5"/><rect x="469" y="542" width="1.5" height="1.5"/><rect x="472" y="542" width="1.5" height="1.5"/></g>
<!-- header icons -->
<g fill="#e8e8e8"><rect x="90" y="151" width="4" height="1.6"/><rect x="90" y="154" width="4" height="1.6"/><rect x="90" y="157" width="4" height="1.6"/><rect x="90" y="160" width="4" height="1.6"/><rect x="90" y="163" width="4" height="1.6"/></g>
<path d="M102 154l7 7M109 154l-7 7" stroke="#e8e8e8" stroke-width="1.5"/>
<path d="M128 151h15v13h-15z M143 155l7-4v13l-7-4z" fill="#e8e8e8"/>
<path d="M156 162h6l-3 2z" fill="#8a8a8a"/>
<path d="M455 150h16v6 M455 150v16h6" stroke="#e8e8e8" stroke-width="2" fill="none"/>
<path d="M457 152l10 10 M461 162h6v-6" stroke="#e8e8e8" stroke-width="2.2" fill="none"/>
<rect x="463" y="158" width="9" height="9" fill="#5f5f5f" stroke="#e8e8e8" stroke-width="1.5"/>
<path d="M465 165l5-5" stroke="#e8e8e8" stroke-width="1.2"/>
</svg>

<!-- ===== 3D AXIS WIDGET ===== -->
<svg class="a" style="left:100px;top:730px" width="130" height="115" viewBox="100 730 130 115">
<g fill="none" stroke="#111" stroke-width="4"><circle cx="127" cy="752" r="12"/></g>
<g fill="none" stroke="#e8e8e8" stroke-width="1.6"><circle cx="127" cy="752" r="12"/><ellipse cx="127" cy="752" rx="5" ry="12"/><path d="M115 752H139 M117 746H137 M117 758H137"/></g>
<path d="M163.5 739l5 5h-3v6h6v-3l5 5-5 5v-3h-6v6h3l-5 5-5-5h3v-6h-6v3l-5-5 5-5v3h6v-6h-3z" fill="#111" stroke="#e8e8e8" stroke-width="1.4"/>
<path d="M200.5 738l7 7h-4v14h4l-7 7-7-7h4v-14h-4z" fill="#111" stroke="#e8e8e8" stroke-width="1.4"/>
<path d="M147 834V781" stroke="#3cb83c" stroke-width="1.5"/><path d="M147 774l-4 9h8z" fill="#3cb83c"/>
<path d="M147 834H198" stroke="#b83c3c" stroke-width="1.5"/><path d="M206 834l-9-4v8z" fill="#b83c3c"/>
<circle cx="147" cy="834" r="3" fill="#3a7ac0"/>
</svg>
<!-- light icon -->
<svg class="a" style="left:846px;top:137px" width="44" height="40" viewBox="846 137 44 40">
<circle cx="868" cy="155" r="18" fill="#f2f2f2"/>
<g stroke="#222" stroke-width="1.6"><path d="M868 146v3 M868 161v3 M859 155h3 M874 155h3 M862 149l2 2 M872 159l2 2 M874 149l-2 2 M862 161l2-2"/></g>
<circle cx="868" cy="155" r="3.5" fill="#222"/>
</svg>

<!--/SEC4-->
<div class="a" style="left:1569px;top:137px;width:25px;height:799px;background:#4a4a4a"></div>
<!-- status bar -->
<div class="a" style="left:71px;top:936px;width:1523px;height:26px;background:#535353"></div>
<!-- timeline -->


<!--SEC1-->
<!-- ===== MENU BAR ===== -->
<div class="a" style="left:0;top:0;width:2048px;height:2px;background:#2a2a2a"></div>
<div class="t" style="left:17px;top:6px;font-size:35px;font-weight:bold;color:#6aa0d8;transform:scaleX(0.85);transform-origin:0 0;letter-spacing:-0.5px">Ps</div>
<div class="t" style="left:82px;top:18px;font-size:18.5px;color:#dedede">File</div>
<div class="t" style="left:137px;top:18px;font-size:18.5px;color:#dedede">Edit</div>
<div class="t" style="left:195px;top:18px;font-size:18.5px;color:#dedede">Image</div>
<div class="t" style="left:274px;top:18px;font-size:18.5px;color:#dedede">Layer</div>
<div class="t" style="left:345px;top:18px;font-size:18.5px;color:#dedede">Type</div>
<div class="t" style="left:414px;top:18px;font-size:18.5px;color:#dedede">Select</div>
<div class="t" style="left:491px;top:18px;font-size:18.5px;color:#dedede">Filter</div>
<div class="t" style="left:560px;top:18px;font-size:18.5px;color:#dedede">3D</div>
<div class="t" style="left:610px;top:18px;font-size:18.5px;color:#dedede">View</div>
<div class="t" style="left:678px;top:18px;font-size:18.5px;color:#dedede;letter-spacing:0.3px">Window</div>
<div class="t" style="left:776px;top:18px;font-size:18.5px;color:#dedede">Help</div>
<!-- window controls -->
<div class="a" style="left:1874px;top:-4px;width:163px;height:36px;border:1.5px solid #686868;border-radius:0 0 5px 5px"></div>
<div class="a" style="left:1918px;top:0;width:1.5px;height:31px;background:#686868"></div>
<div class="a" style="left:1961px;top:0;width:1.5px;height:31px;background:#686868"></div>
<div class="a" style="left:1888px;top:18px;width:16px;height:5px;background:#b2b2b2"></div>
<div class="a" style="left:1932px;top:10px;width:16px;height:13px;border:3px solid #b2b2b2"></div>
<svg class="a" style="left:1990px;top:9px" width="20" height="15" viewBox="0 0 20 15"><path d="M2 1 L18 14 M18 1 L2 14" stroke="#b2b2b2" stroke-width="3"/></svg>

<!-- ===== OPTIONS BAR ===== -->
<div class="a" style="left:14px;top:63px;width:3px;height:31px;background:repeating-linear-gradient(#3a3a3a 0 2px,transparent 2px 4px)"></div>
<svg class="a" style="left:40px;top:66px" width="28" height="28" viewBox="0 0 28 28"><g fill="#dcdcdc"><path d="M13 4h2v20h-2z M4 13h20v2H4z"/><path d="M14 1l-5 5h10z M14 27l-5-5h10z M1 14l5-5v10z M27 14l-5-5v10z"/></g></svg>
<svg class="a" style="left:79px;top:77px" width="12" height="8" viewBox="0 0 12 8"><path d="M1 1l5 5 5-5" stroke="#cfcfcf" stroke-width="1.6" fill="none"/></svg>
<div class="a" style="left:105px;top:62px;width:1px;height:34px;background:#3e3e3e"></div>
<div class="a" style="left:116px;top:69px;width:17px;height:16.5px;border:1.6px solid #7a7a7a;border-radius:3.5px;background:#4e4e4e"></div>
<div class="t" style="left:141px;top:71px;font-size:16px;color:#dcdcdc">Auto-Select:</div>
<div class="a" style="left:247px;top:64px;width:89px;height:29px;background:#444444;border:1px solid #5a5a5a;border-radius:3px"></div>
<div class="t" style="left:259px;top:71px;font-size:16.5px;color:#dcdcdc">Group</div>
<svg class="a" style="left:320px;top:75px" width="12" height="8" viewBox="0 0 12 8"><path d="M1 1l5 5 5-5" stroke="#cfcfcf" stroke-width="1.6" fill="none"/></svg>
<div class="a" style="left:351px;top:62px;width:1px;height:34px;background:#3e3e3e"></div>
<div class="a" style="left:366px;top:69px;width:16px;height:16px;border:1.5px solid #4e4e4e;border-radius:3px;background:#4c4c4c"></div>
<div class="t" style="left:390px;top:71px;font-size:16px;color:#8b8b8b">Show Transform Controls</div>
<div class="a" style="left:590px;top:62px;width:1px;height:34px;background:#3e3e3e"></div>
<svg class="a" style="left:600px;top:56px" width="580" height="44" viewBox="600 56 580 44"><g fill="#a0a0a0">
<rect x="614" y="68" width="22" height="2"/><rect x="617" y="71.5" width="6.5" height="16.5"/><rect x="627" y="71.5" width="6" height="11"/>
<rect x="655" y="78" width="22" height="1.5"/><rect x="658" y="70" width="7" height="16.5"/><rect x="668" y="73" width="6" height="11"/>
<rect x="699.5" y="67" width="6.5" height="17"/><rect x="709" y="73" width="6.5" height="11"/><rect x="696" y="86" width="23" height="1.5"/>
<rect x="751.5" y="66" width="1.5" height="24"/><rect x="754" y="70.5" width="11.5" height="6.5"/><rect x="754" y="80" width="17" height="6.5"/>
<rect x="802" y="66" width="1.5" height="24"/><rect x="797" y="70" width="11" height="6.5"/><rect x="794" y="79.5" width="17" height="6.5"/>
<rect x="852" y="66" width="1.5" height="24"/><rect x="839" y="70.5" width="11" height="6.5"/><rect x="834" y="80" width="16" height="6.5"/>
<rect x="901" y="69" width="22" height="1.5"/><rect x="908" y="70" width="9" height="6"/><rect x="901" y="80" width="22" height="1.5"/><rect x="905" y="81" width="14" height="5.5"/>
<rect x="942" y="72" width="22" height="1.5"/><rect x="949" y="69" width="8" height="6"/><rect x="942" y="82" width="22" height="1.5"/><rect x="946" y="79" width="14" height="6"/>
<rect x="984" y="69" width="9" height="6"/><rect x="983" y="75" width="22" height="1.5"/><rect x="987" y="79" width="14" height="6.5"/><rect x="983" y="85.5" width="22" height="1.5"/>
<rect x="1039.5" y="65" width="1.5" height="24"/><rect x="1041" y="69.5" width="6" height="15.5"/><rect x="1050.5" y="65" width="1.5" height="24"/><rect x="1052" y="73" width="5" height="8"/>
<rect x="1082" y="68" width="6" height="15"/><rect x="1084.5" y="65" width="1.5" height="24"/><rect x="1091" y="73" width="6" height="9"/><rect x="1093.5" y="65" width="1.5" height="24"/>
<rect x="1122" y="69.5" width="6" height="15.5"/><rect x="1128" y="65" width="1.5" height="24"/><rect x="1133" y="73" width="5" height="8"/><rect x="1138" y="65" width="1.5" height="24"/>
</g></svg>
<div class="a" style="left:877px;top:62px;width:1px;height:34px;background:#3e3e3e"></div>
<div class="a" style="left:1164px;top:62px;width:1px;height:34px;background:#3e3e3e"></div>
<svg class="a" style="left:1188px;top:65px" width="22" height="26" viewBox="0 0 22 26"><g fill="#a0a0a0"><rect x="1" y="3" width="6" height="6"/><rect x="1" y="11" width="6" height="13"/><rect x="9.5" y="1" width="1.5" height="24"/><rect x="13" y="3" width="6" height="6"/><rect x="13" y="11" width="6" height="13"/></g></svg>
<div class="a" style="left:1233px;top:62px;width:1px;height:34px;background:#3e3e3e"></div>
<div class="t" style="left:1248px;top:71px;font-size:16px;color:#c8c8c8">3D Mode:</div>
<div class="a" style="left:1338px;top:59px;width:39px;height:39px;background:#333333;border:1px solid #474747;border-radius:3px"></div>
<svg class="a" style="left:1336px;top:56px" width="210" height="44" viewBox="1336 56 210 44">
<g fill="none" stroke="#e0e0e0" stroke-width="1.7">
<circle cx="1359.2" cy="73.8" r="5.9"/>
<path d="M1353.5 73.5c-6 0-10 2-9.5 5c.4 2.5 2.5 4.5 4.5 5.5 M1365.5 76c4 2 6.5 5 5.5 7.5c-1 2.5-5 3.5-8.5 3.5"/>
<circle cx="1398.7" cy="77.6" r="12.4" stroke-dasharray="38.95 9.5 29.5 0"/>
<circle cx="1398.7" cy="77.6" r="5.9" fill="#5a5a5a"/>
<path d="M1440.3 66l3.5 3.5h-2v6.5h6.5v-2l3.5 3.5-3.5 3.5v-2h-6.5v6.5h2l-3.5 3.5-3.5-3.5h2v-6.5h-6.5v2l-3.5-3.5 3.5-3.5v2h6.5v-6.5h-2z" fill="#5a5a5a" stroke-width="1.6" stroke-linejoin="round"/>
</g>
<path d="M1348.5 82l10.5 5.8h-10.5z" fill="#e0e0e0"/>
<path d="M1386.5 73l1.5-8 7.5 3.2z" fill="#e0e0e0"/>
<g fill="#e0e0e0">
<path d="M1481.4 65.5l3 3.5h-6z M1481.4 90.5l-5-5h10z M1468.5 76.5l4.5-4v8z M1494.3 76.5l-4.5-4v8z"/>
<rect x="1480.5" y="68" width="1.8" height="18"/><rect x="1472" y="75.6" width="18" height="1.8"/>
</g>
<circle cx="1481.4" cy="76.5" r="4.8" fill="#5a5a5a" stroke="#e0e0e0" stroke-width="1.6"/>
<g fill="none" stroke="#e0e0e0" stroke-width="1.6" stroke-linejoin="round">
<path d="M1515 73l8.5-5 8.5 5v10.5l-8.5 5-8.5-5z M1515 73l8.5 5 8.5-5 M1523.5 78v10.5" fill="#5a5a5a"/>
<path d="M1509 82l5-3 5 3v7l-5 3-5-3z M1509 82l5 3 5-3 M1514 85v7" fill="#777"/>
<path d="M1509 73l5-5 M1510 67.5h4.5v4.5"/>
</g>
</svg>
<!-- workspace dropdown -->
<div class="a" style="left:1813px;top:63px;width:218px;height:29px;background:#424242;border:1px solid #5d5d5d;border-radius:3px"></div>
<div class="t" style="left:1827px;top:71px;font-size:16.5px;color:#dcdcdc">3D</div>
<svg class="a" style="left:2014px;top:75px" width="12" height="8" viewBox="0 0 12 8"><path d="M1 1l5 5 5-5" stroke="#cfcfcf" stroke-width="1.6" fill="none"/></svg>

<!--/SEC1-->
<!--SEC2-->
<!-- ===== LEFT TOOLBOX ===== -->
<svg class="a" style="left:14px;top:109px" width="14" height="10" viewBox="0 0 14 10"><path d="M1 1l4 4-4 4 M7 1l4 4-4 4" stroke="#c8c8c8" stroke-width="1.3" fill="none"/></svg>
<div class="a" style="left:22px;top:130px;width:31px;height:7px;background:repeating-linear-gradient(90deg,#3a3a3a 0 1.5px,transparent 1.5px 3px)"></div>
<div class="a" style="left:13px;top:152px;width:49px;height:33px;background:#333333;border:1px solid #454545;border-radius:4px"></div>
<svg class="a" style="left:0;top:140px" width="71" height="850" viewBox="0 140 71 850">
<g fill="#dcdcdc" stroke="none">
<!-- move -->
<path d="M34.6 165h2v15h-2z M28 171.5h15v2H28z M35.6 160.5l-4.5 5h9z M35.6 184.5l-4.5-5h9z M24 172.5l5-4.5v9z M47.2 172.5l-5-4.5v9z"/>
<!-- small triangles -->
<path d="M56 221v5h-5z M56 263v5h-5z M56 304v5h-5z M56 386v5h-5z M56 428v5h-5z M56 469v5h-5z M56 552v5h-5z M56 593v5h-5z M56 635v5h-5z M56 676v5h-5z M56 717v5h-5z M56 799v5h-5z M56 970v5h-5z" fill="#bdbdbd"/>
</g>
<g fill="none" stroke="#dcdcdc" stroke-width="2">
<!-- marquee -->
<path d="M25 203h24v19H25z" stroke-dasharray="5 3.5"/>
<!-- lasso -->
<ellipse cx="37" cy="252" rx="12" ry="8"/><path d="M29 258c-4 2 -3 7 2 6c3-1 0-5 -3-3c-2 2 0 5 1 8"/>
<!-- quick select dotted -->
<path d="M30 287c-5 0-6 5-6 10c0 5 2 9 6 9c3 0 5-2 5-5" stroke-dasharray="1.5 2.5"/>
<!-- eyedropper -->
<path d="M27 345l12-12 M25 348c-1-1 -1-3 0-4l10-10 4 4-10 10c-1 1-3 1-4 0z"/>
<!-- eraser -->
<path d="M25 465l10-10 M25 465l5 6h19 M30 471l10-10"/>
<!-- bucket -->
<path d="M26 501l9-6 9 10-9 8z" stroke-width="1.8"/><path d="M30 497c0-5 3-7 6-6c2 1 2 4 1 9" stroke-width="1.6"/>
<!-- pen -->
<path d="M27 595c1-6 3-10 7-14l6 6c-4 4-8 6-13 8z M27 595l6-6"/>
<!-- rectangle -->
<rect x="25" y="657" width="22" height="18" fill="#6b6b6b"/>
<!-- zoom -->
<circle cx="34" cy="746" r="8"/><path d="M40 752l7 7" stroke-width="3"/>
<!-- quick mask -->
<rect x="23.5" y="911" width="26" height="19"/>
<circle cx="36.5" cy="920.5" r="6" stroke-dasharray="1.5 2" stroke-width="1.6"/>
<!-- screen mode -->
<path d="M23.5 955h16v14h-16z" stroke-width="1.8"/><rect x="31" y="951" width="18" height="13" fill="#535353" stroke-width="1.8"/>
</g>
<g fill="#dcdcdc">
<!-- quick select brush -->
<path d="M49 285l-9 9.5 2.5 2.5 8-10.5z M39 295.5c-3-1-6 1-7 4c-1 2.5-2 4-4 5c5 1.5 10 0 11.5-3.5c.5-1.5.5-3-.5-5.5z"/>
<!-- eyedropper top -->
<path d="M40 325c2-2 5-1 6 1c1 2 0 4-1 5l-3 3 2 2-3 3-9-9 3-3 2 2z"/>
<path d="M22 327h6v6h-6z" fill="#bdbdbd" opacity="0.7"/>
<!-- brush -->
<path d="M47.5 364.5l-10 11.5 3 3 9-12.5z M36.5 377c-3.5-1-7 1-8 4.5c-1 3-2 5-4.5 6.5c5.5 1.5 11 0 12.5-4c.7-2 .5-4.5 0-7z"/>
<!-- stamp -->
<circle cx="36" cy="411" r="4.5"/><path d="M34 414h4v5h8v5H26v-5h8z M26 426h20v2H26z"/>
<!-- eraser body -->
<path d="M35 455l6-6 7 7-9 9-7-7z"/>
<!-- bucket drip -->
<path d="M46 507c1.5 2.5 3 4 3 5.5a3 3 0 0 1-6 0c0-1.5 1.5-3 3-5.5z"/><circle cx="36.5" cy="500" r="1.4"/>
<path d="M21 489h6v6h-6z" opacity="0.6"/>
<!-- Type -->
<path d="M26 533h20v6h-2v-3.5h-7v16.5h3v2H31v-2h3V535.5h-7V539h-2z"/>
<!-- pen nib -->
<path d="M34 581l4-4 6 6-4 4z"/>
<!-- path select arrow (black) -->
</g>
<path d="M29 613v20l5-5 4 9 3-1-4-9h7z" fill="#111" stroke="#dcdcdc" stroke-width="1.5"/>
<g fill="#dcdcdc">
<!-- hand -->
<path d="M29 697c0-2 3-2 3 0v7h1v-10c0-2 3-2 3 0v10h1v-11c0-2 3-2 3 0v11h1v-9c0-2 3-2 3 0v13c0 6-4 10-9 10c-4 0-6-2-8-5l-5-6c-1-2 1-3 3-2l3 3z"/>
<!-- dots -->
<circle cx="27" cy="790" r="2.6"/><circle cx="36" cy="790" r="2.6"/><circle cx="45" cy="790" r="2.6"/>
</g>
<!-- fg/bg small -->
<rect x="18" y="825" width="11" height="11" fill="#dcdcdc"/><rect x="14" y="821" width="10" height="10" fill="#111" stroke="#dcdcdc" stroke-width="1.5"/>
<path d="M44 823h8v9 M44 823l3-3 M44 823l3 3 M52 836l-3-3 M52 836l3-3" stroke="#dcdcdc" stroke-width="2" fill="none"/>
<!-- colors -->
<rect x="29.5" y="861" width="29" height="30" fill="#000" stroke="#2e2e2e" stroke-width="1"/>
<rect x="31" y="862.5" width="26" height="27" fill="none" stroke="#f0f0f0" stroke-width="1.5"/>
<rect x="14" y="845.5" width="29.5" height="29.5" fill="#fff" stroke="#2e2e2e" stroke-width="1"/>
</svg>

<!-- ===== DOC TAB ===== -->
<div class="t" style="left:86px;top:114.5px;font-size:17.5px;font-weight:bold;color:#e6e6e6">Pixie pre-animation.psd @ 70.2% (Pixie_1, RGB/8) *</div>
<svg class="a" style="left:521px;top:116px" width="12" height="12" viewBox="0 0 12 12"><path d="M1 1l10 10M11 1L1 11" stroke="#b0b0b0" stroke-width="1.3"/></svg>

<!-- ===== STATUS BAR ===== -->
<div class="a" style="left:146px;top:936px;width:1.5px;height:26px;background:#444"></div>
<div class="t" style="left:85px;top:940px;font-size:16px;color:#d6d6d6">70.2%</div>
<svg class="a" style="left:150px;top:938px" width="24" height="20" viewBox="0 0 24 20"><path d="M3 6v11h15v-4" stroke="#d0d0d0" stroke-width="1.8" fill="none"/><path d="M7 14c1-5 5-8 10-8V3l5 5-5 5V9c-4 0-7 2-10 5z" fill="#d0d0d0"/></svg>
<div class="t" style="left:249px;top:941px;font-size:16px;color:#c2c2c2">Doc: 5.93M/3.26M</div>
<svg class="a" style="left:453px;top:943px" width="8" height="16" viewBox="0 0 8 16"><path d="M1.5 1l4.5 7-4.5 7" stroke="#d8d8d8" stroke-width="1.4" fill="none"/></svg>
<div class="a" style="left:468px;top:936px;width:1126px;height:25.5px;background:#4a4a4a"></div><div class="a" style="left:1569px;top:936px;width:25px;height:25.5px;background:#4e4e4e"></div>

<!--/SEC2-->
<!--SEC5-->
<!-- ===== TIMELINE ===== -->
<div class="a" style="left:71px;top:961.5px;width:1523px;height:31px;background:#424242;border-top:3.5px solid #3c3c3c;border-bottom:1.5px solid #3a3a3a"></div>
<div class="a" style="left:71px;top:965px;width:88px;height:27.5px;background:#535353"></div>
<div class="t" style="left:83px;top:973px;font-size:16px;font-weight:bold;color:#e4e4e4">Timeline</div>
<svg class="a" style="left:1568px;top:973px" width="18" height="12" viewBox="0 0 18 12"><path d="M1 1.5h16M1 4.5h16M1 7.5h16M1 10.5h16" stroke="#c8c8c8" stroke-width="1.4"/></svg>
<div class="a" style="left:71px;top:992px;width:1523px;height:210px;background:#535353"></div>
<!-- controls -->
<svg class="a" style="left:71px;top:992px" width="411" height="60" viewBox="71 992 411 60">
<g fill="#dcdcdc">
<rect x="85" y="1016.4" width="3.6" height="11.2"/><path d="M102.6 1015.5v13l-13-6.5z"/>
<path d="M144 1015.5v13l-11-6.5z"/><rect x="145.5" y="1016.4" width="4" height="11.2"/>
<path d="M186 1015v14l14-7z"/>
<g fill="#8a8a8a"><rect x="234.6" y="1016.4" width="3.4" height="11.2"/><path d="M239 1015.5v13l12-6.5z"/></g>
</g>
<rect x="269.5" y="1002" width="42.5" height="39.5" rx="4" fill="#333" stroke="#444" stroke-width="1"/>
<path d="M283 1018h4l6-5v18l-6-5h-4z" fill="#e0e0e0"/>
<path d="M296 1018c2 2 2 6 0 8 M299 1015c4 4 4 10 0 14" stroke="#e0e0e0" stroke-width="1.5" fill="none"/>
<g transform="translate(340 1022)" fill="#dcdcdc"><circle r="5.5"/><g><rect x="-1.8" y="-8.5" width="3.6" height="17"/><rect x="-8.5" y="-1.8" width="17" height="3.6"/><rect x="-1.8" y="-8.5" width="3.6" height="17" transform="rotate(45)"/><rect x="-1.8" y="-8.5" width="3.6" height="17" transform="rotate(-45)"/></g><circle r="2.3" fill="#535353"/></g>
<path d="M353 1037h6l-3 3z" fill="#e8e8e8"/>
<rect x="369.5" y="998" width="1" height="50" fill="#444"/>
<g stroke="#dcdcdc" stroke-width="1.8" fill="none"><circle cx="391" cy="1015.5" r="3.3"/><circle cx="391" cy="1027.5" r="3.3"/><path d="M394 1017.5l17 9 M394 1025.5l17-9"/></g>
<rect x="441" y="1012" width="18.5" height="19" fill="none" stroke="#dcdcdc" stroke-width="1.5"/><path d="M459.5 1012v19h-18.5z" fill="#dcdcdc"/>
</svg>
<!-- column divider -->
<div class="a" style="left:482px;top:992px;width:1.5px;height:210px;background:#444"></div>
<div class="a" style="left:71px;top:1051px;width:411px;height:2px;background:#444"></div>
<!-- ruler -->
<div class="a" style="left:483.5px;top:1025px;width:1010px;height:1px;background:#444"></div>
<div class="t" style="left:483px;top:998.5px;font-size:16.6px;color:#e0e0e0">f</div>
<div class="t" style="left:556px;top:998.5px;font-size:16.6px;color:#e0e0e0;letter-spacing:-0.3px">03:00f</div>
<div class="t" style="left:668px;top:998.5px;font-size:16.6px;color:#e0e0e0">15f</div>
<div class="t" style="left:759px;top:998.5px;font-size:16.6px;color:#e0e0e0;letter-spacing:-0.3px">04:00f</div>
<div class="t" style="left:871px;top:998.5px;font-size:16.6px;color:#e0e0e0">15f</div>
<div class="t" style="left:962px;top:998.5px;font-size:16.6px;color:#e0e0e0;letter-spacing:-0.3px">05:00f</div>
<div class="t" style="left:1074px;top:998.5px;font-size:16.6px;color:#e0e0e0">15f</div>
<div class="t" style="left:1165px;top:998.5px;font-size:16.6px;color:#e0e0e0;letter-spacing:-0.3px">06:00f</div>
<div class="t" style="left:1277px;top:998.5px;font-size:16.6px;color:#e0e0e0">15f</div>
<div class="t" style="left:1368px;top:998.5px;font-size:16.6px;color:#e0e0e0;letter-spacing:-0.3px">07:00f</div>
<div class="t" style="left:1483px;top:998.5px;font-size:16.6px;color:#e0e0e0">15f</div>
<svg class="a" style="left:483px;top:1014px" width="1010" height="25" viewBox="483 1014 1010 25"><path d="M578.2 1015v22 M680 1026v11 M781.2 1015v22 M883 1026v11 M984.4 1015v22 M1086 1026v11 M1187.5 1015v22 M1289.4 1026v11 M1390.7 1015v22" stroke="#444" stroke-width="1"/></svg>
<div class="a" style="left:495px;top:1048px;width:8px;height:3px;background:#5aa6a0"></div>
<div class="a" style="left:1492px;top:1025px;width:34px;height:27px;background:#474747"></div>
<div class="a" style="left:1525px;top:992px;width:1px;height:180px;background:#4a4a4a"></div>
<div class="a" style="left:1493px;top:1053px;width:32px;height:119px;background:#4c4c4c"></div>
<!-- Pixie_1 row -->
<div class="a" style="left:71px;top:1053px;width:411px;height:65px;background:#6a6a6a"></div>
<svg class="a" style="left:85px;top:1079px" width="10" height="16" viewBox="0 0 10 16"><path d="M2 1.5l5 6.5-5 6.5" stroke="#e0e0e0" stroke-width="1.4" fill="none"/></svg>
<div class="t" style="left:113px;top:1080.5px;font-size:17px;font-weight:bold;color:#f0f0f0">Pixie_1</div>
<svg class="a" style="left:436px;top:1076px" width="40" height="22" viewBox="436 1076 40 22"><g fill="none" stroke="#e0e0e0" stroke-width="1.6"><rect x="438" y="1077" width="14" height="18.5"/><path d="M441.5 1077v18.5 M448.5 1077v18.5 M441.5 1086h7"/></g><rect x="455" y="1078" width="17" height="17" fill="#5c5c5c"/><path d="M459 1085l4.5 4 4.5-4" stroke="#e0e0e0" stroke-width="1.5" fill="none"/></svg>
<!-- Layer 1 row -->
<div class="a" style="left:71px;top:1118px;width:411px;height:2px;background:#444"></div>
<svg class="a" style="left:85px;top:1145px" width="10" height="16" viewBox="0 0 10 16"><path d="M2 1.5l5 6.5-5 6.5" stroke="#e0e0e0" stroke-width="1.4" fill="none"/></svg>
<div class="t" style="left:113px;top:1147px;font-size:16px;color:#e4e4e4">Layer 1</div>
<svg class="a" style="left:436px;top:1142px" width="40" height="22" viewBox="436 1142 40 22"><g fill="none" stroke="#e0e0e0" stroke-width="1.6"><rect x="438" y="1143" width="14" height="18.5"/><path d="M441.5 1143v18.5 M448.5 1143v18.5 M441.5 1152h7"/></g><path d="M459 1151l4.5 4 4.5-4" stroke="#e0e0e0" stroke-width="1.5" fill="none"/></svg>
<div class="a" style="left:71px;top:1172px;width:1523px;height:1px;background:#444"></div>
<!-- clips -->
<div class="a" style="left:483.5px;top:1053.5px;width:1007px;height:63px;background:#7d5eae;border-top:3.5px solid #e4dcf2;border-bottom:3px solid #e4dcf2;border-right:3px solid #e4dcf2;border-radius:0 4px 4px 0;box-shadow:0 1.5px 0 #111"></div>
<div class="a" style="left:484px;top:1057px;width:60px;height:56px;background-color:#fff;background-image:linear-gradient(45deg,#ccc 25%,transparent 25%,transparent 75%,#ccc 75%),linear-gradient(45deg,#ccc 25%,transparent 25%,transparent 75%,#ccc 75%);background-size:12px 12px;background-position:0 0,6px 6px"></div>
<svg class="a" style="left:484px;top:1057px" width="60" height="56" viewBox="0 0 60 56"><circle cx="32" cy="16" r="3" fill="#b85a28"/><path d="M28 19h8l1 14h-10z" fill="#4a2418"/><path d="M28 33h8l-1 7h-6z" fill="#222"/><path d="M29 40l-1 12h2l2-12 M33 40l1 12h2l-1-12" stroke="#6a4a3a" stroke-width="1.8"/></svg>
<svg class="a" style="left:550px;top:1060px" width="10" height="16" viewBox="0 0 10 16"><path d="M2 1.5l5 6.5-5 6.5" stroke="#e8e0f4" stroke-width="1.4" fill="none"/></svg>
<div class="t" style="left:573px;top:1060.5px;font-size:16.8px;font-weight:bold;color:#f4f0fa">Pixie_1</div>
<div class="a" style="left:483.5px;top:1119.5px;width:497px;height:52.5px;background:#7d5eae;border-top:1.5px solid #b8a4dc;border-radius:0 4px 0 0"></div>
<svg class="a" style="left:961px;top:1126px" width="17" height="17" viewBox="0 0 17 17"><rect x="0.5" y="0.5" width="16" height="16" rx="1.5" fill="#b0b0b0"/><path d="M5 3.5v10l8-5z" fill="#6a6a6a"/></svg>
<!-- playhead -->
<div class="a" style="left:1484.8px;top:1020px;width:1.8px;height:152px;background:#e01818"></div>
<svg class="a" style="left:1473px;top:1000px" width="24" height="25" viewBox="0 0 24 25"><path d="M2 3.5c0-1.5 1-2.5 2.5-2.5h15c1.5 0 2.5 1 2.5 2.5v10l-10 10-10-10z" fill="#2f72d2" stroke="#d8e4f8" stroke-width="1.2"/><g fill="#fff"><rect x="7" y="9" width="2" height="2.5"/><rect x="11" y="9" width="2" height="2.5"/><rect x="15" y="9" width="2" height="2.5"/><rect x="11" y="3" width="1.6" height="4"/><rect x="11" y="17" width="1.6" height="4"/></g></svg>
<svg class="a" style="left:1491px;top:1024px" width="14" height="29" viewBox="0 0 14 29"><rect x="1.5" y="1" width="11" height="26" rx="2.5" fill="#6a6a6a" stroke="#e0e0e0" stroke-width="1.6"/><rect x="5" y="10" width="1.5" height="9" fill="#fff"/><rect x="8" y="10" width="1.5" height="9" fill="#fff"/></svg>
<!-- plus column -->
<svg class="a" style="left:1538px;top:1076px" width="18" height="18" viewBox="0 0 18 18"><path d="M9 1v16M1 9h16" stroke="#e4e4e4" stroke-width="3"/></svg>
<svg class="a" style="left:1538px;top:1143px" width="18" height="18" viewBox="0 0 18 18"><path d="M9 1v16M1 9h16" stroke="#e4e4e4" stroke-width="3"/></svg>
<!-- vertical scroll -->
<div class="a" style="left:1569px;top:1053px;width:25px;height:119px;background:#4b4b4b"></div>
<svg class="a" style="left:1575px;top:1063px" width="14" height="10" viewBox="0 0 14 10"><path d="M2 8l5-5 5 5" stroke="#c8c8c8" stroke-width="1.4" fill="none"/></svg>
<div class="a" style="left:1572px;top:1079px;width:18.5px;height:42.5px;background:#6a6a6a"></div>
<svg class="a" style="left:1575px;top:1150px" width="14" height="10" viewBox="0 0 14 10"><path d="M2 2l5 5 5-5" stroke="#c8c8c8" stroke-width="1.4" fill="none"/></svg>
<!-- footer -->
<div class="a" style="left:483.5px;top:1173px;width:1086px;height:29px;background:#4b4b4b"></div>
<div class="a" style="left:71px;top:1173px;width:411px;height:29px;background:#535353"></div>
<div class="a" style="left:483.5px;top:1173px;width:246px;height:29px;background:#535353"></div>
<g></g>
<svg class="a" style="left:78px;top:1180px" width="32" height="14" viewBox="0 0 32 14"><g fill="none" stroke="#9a9a9a" stroke-width="1.6"><rect x="2" y="2" width="7" height="9.5"/><rect x="12" y="2" width="7" height="9.5"/><rect x="22" y="2" width="7" height="9.5"/></g></svg>
<svg class="a" style="left:127px;top:1176px" width="24" height="20" viewBox="0 0 24 20"><path d="M2 18c1-7 6-11 13-11V3l7 6.5-7 6.5v-4c-6 0-10 2-13 6z" fill="#dcdcdc"/></svg>
<div class="t" style="left:216px;top:1177px;font-size:18px;font-weight:bold;color:#ececec">0:00:07:14</div>
<div class="t" style="left:381px;top:1178px;font-size:16.5px;color:#dcdcdc">(30.00 fps)</div>
<svg class="a" style="left:495px;top:1175px" width="240" height="28" viewBox="495 1175 240 28">
<path d="M498 1192l5-5 2 2 3-3 6 6z" fill="#e0e0e0"/>
<rect x="543" y="1178" width="134" height="4.5" fill="#7a7a7a"/>
<path d="M585 1184l8 8v8c0 .8-.5 1.2-1.2 1.2h-13.6c-.7 0-1.2-.4-1.2-1.2v-8z" fill="#f4f4f4" stroke="#333" stroke-width="1.2"/>
<path d="M697 1192l10-10 4 4 5-5 9 11z" fill="#e0e0e0"/>
</svg>
<svg class="a" style="left:745px;top:1181px" width="10" height="14" viewBox="0 0 10 14"><path d="M7.5 2l-5 5 5 5" stroke="#a8a8a8" stroke-width="1.4" fill="none"/></svg>
<div class="a" style="left:960px;top:1176px;width:392px;height:22px;background:#6a6a6a;border-radius:2px"></div>
<svg class="a" style="left:1547px;top:1181px" width="10" height="14" viewBox="0 0 10 14"><path d="M2.5 2l5 5-5 5" stroke="#a8a8a8" stroke-width="1.4" fill="none"/></svg>

<!--/SEC5-->
<!--SEC6-->
<!-- ===== RIGHT DOCK ===== -->
<div class="a" style="left:1594px;top:105px;width:454px;height:1105px;background:#3c3c3c"></div>
<div class="a" style="left:2040px;top:105px;width:8px;height:1105px;background:#4a4a4a;border-left:1.5px solid #383838"></div>
<div class="a" style="left:1598px;top:105px;width:442px;height:19.5px;background:#424242"></div>
<svg class="a" style="left:1636px;top:109px" width="14" height="10" viewBox="0 0 14 10"><path d="M6 1L2 5l4 4 M12 1L8 5l4 4" stroke="#c8c8c8" stroke-width="1.3" fill="none"/></svg>
<svg class="a" style="left:2018px;top:109px" width="14" height="10" viewBox="0 0 14 10"><path d="M1 1l4 4-4 4 M7 1l4 4-4 4" stroke="#c8c8c8" stroke-width="1.3" fill="none"/></svg>
<!-- icon column groups -->
<div class="a" style="left:1598.5px;top:125px;width:59.5px;height:63px;background:#535353"></div>
<div class="a" style="left:1598.5px;top:190px;width:59.5px;height:107.5px;background:#535353"></div>
<div class="a" style="left:1598.5px;top:299.5px;width:59.5px;height:63.5px;background:#535353"></div>
<div class="a" style="left:1598.5px;top:365px;width:59.5px;height:107.5px;background:#535353"></div>
<div class="a" style="left:1598.5px;top:474.5px;width:59.5px;height:64px;background:#535353"></div>
<div class="a" style="left:1598.5px;top:540.5px;width:59.5px;height:63px;background:#535353"></div>
<div class="a" style="left:1598.5px;top:605.5px;width:59.5px;height:596.5px;background:#535353"></div>
<svg class="a" style="left:1598px;top:125px" width="60" height="480" viewBox="1598 125 60 480">
<g fill="#3c3c3c">
<rect x="1613" y="130" width="30" height="6"/><rect x="1613" y="196" width="30" height="6"/><rect x="1613" y="304" width="30" height="6"/><rect x="1613" y="370" width="30" height="6"/><rect x="1613" y="479.5" width="30" height="6"/><rect x="1613" y="545" width="30" height="6"/>
</g>
<g stroke="#535353" stroke-width="1.5">
<path d="M1615 129v8M1618 129v8M1621 129v8M1624 129v8M1627 129v8M1630 129v8M1633 129v8M1636 129v8M1639 129v8M1642 129v8"/>
<path d="M1615 195v8M1618 195v8M1621 195v8M1624 195v8M1627 195v8M1630 195v8M1633 195v8M1636 195v8M1639 195v8M1642 195v8"/>
<path d="M1615 303v8M1618 303v8M1621 303v8M1624 303v8M1627 303v8M1630 303v8M1633 303v8M1636 303v8M1639 303v8M1642 303v8"/>
<path d="M1615 369v8M1618 369v8M1621 369v8M1624 369v8M1627 369v8M1630 369v8M1633 369v8M1636 369v8M1639 369v8M1642 369v8"/>
<path d="M1615 478.5v8M1618 478.5v8M1621 478.5v8M1624 478.5v8M1627 478.5v8M1630 478.5v8M1633 478.5v8M1636 478.5v8M1639 478.5v8M1642 478.5v8"/>
<path d="M1615 544v8M1618 544v8M1621 544v8M1624 544v8M1627 544v8M1630 544v8M1633 544v8M1636 544v8M1639 544v8M1642 544v8"/>
</g>
<g fill="#dcdcdc">
<!-- history -->
<rect x="1617.5" y="169" width="8" height="7.5"/>
<rect x="1618.3" y="150" width="6.5" height="6.5" fill="none" stroke="#dcdcdc" stroke-width="1.6"/><rect x="1618.3" y="159.5" width="6.5" height="6.5" fill="none" stroke="#dcdcdc" stroke-width="1.6"/>
<path d="M1630 157l6-6 1 5c5 5 4 15-5 19c5-5 6-12 2-17z"/>
<!-- brushes cup -->
<rect x="1622" y="230" width="13" height="14"/>
<path d="M1624 229c-3-5-4-10-2-14c3 2 4 7 3 14z M1628.5 229v-15l-2-3h4l-2 3 M1632 229c1-6 4-10 9-10c-2 4-5 7-8 10z"/>
<rect x="1627.8" y="212" width="1.5" height="17"/>
<!-- brush presets -->
<path d="M1613 264c4-4 10-4 14 0c-4 3-9 4-14 0z"/><rect x="1631" y="263" width="16" height="3"/><rect x="1617" y="277" width="13" height="3"/><path d="M1631 273c6-4 13-2 15 3c0 6-4 10-6 11z"/>
<!-- clone source -->
<rect x="1614" y="326" width="3" height="2.5"/><rect x="1614" y="331" width="3" height="2.5"/><rect x="1614" y="336" width="3" height="2.5"/><rect x="1619" y="326" width="6" height="1.8"/><rect x="1619" y="331" width="5" height="1.8"/><rect x="1619" y="336" width="5" height="1.8"/>
<circle cx="1633.5" cy="330" r="4.7"/><path d="M1631 333h5v4h7v5h-19v-5h7z"/><rect x="1624" y="344" width="19" height="2"/>
</g>
<text x="1618.5" y="414.5" font-family="Liberation Sans" font-size="27" fill="#dcdcdc">A</text><rect x="1640" y="390" width="1.8" height="25" fill="#dcdcdc"/>
<path d="M1624 436h15v2.2h-2v22h-2.2v-22h-3v22h-2.2v-12.5c-4 0-7-2.5-7-5s2.5-4.7 6-4.7z" fill="#dcdcdc"/>
<g fill="#dcdcdc">
<path d="M1617 500c3-2 7-1 8 2l3 3-3 3-3-3c-3 1-6-1-6-4l3 1 1-1z"/>
<path d="M1642 501l-13 15c-3-1-6 1-7 3l-3 4c1 2 3 3 5 2l3-4c1-2 1-4-1-6l13-15z"/>
<circle cx="1638" cy="519" r="4" fill="none" stroke="#dcdcdc" stroke-width="2"/><path d="M1628 508l7 8" stroke="#dcdcdc" stroke-width="2"/>
</g>
<g fill="none" stroke="#d8d8d8" stroke-width="3"><path d="M1621 588.5c-7 0-9-10-2-12.5c1-8 14-10 18-3c8-1 11 12 3 15.5z"/><path d="M1624 584c-3-3 0-7 4-6c3 1 4 4 6 6c2 2 5 2 6-1c1-3-3-5-6-3"/></g>
</svg>

<!-- ===== PROPERTIES PANEL ===== -->
<div class="a" style="left:1662px;top:125px;width:378px;height:27px;background:#424242"></div>
<div class="a" style="left:1662px;top:125px;width:98.5px;height:27px;background:#535353"></div>
<div class="t" style="left:1674px;top:132px;font-size:16px;font-weight:bold;color:#eaeaea;letter-spacing:-0.2px">Properties</div>
<svg class="a" style="left:2013px;top:132px" width="19" height="14" viewBox="0 0 19 14"><path d="M1 1.5h17M1 5h17M1 8.5h17M1 12h17" stroke="#cfcfcf" stroke-width="1.4"/></svg>
<div class="a" style="left:1662px;top:152px;width:378px;height:509px;background:#535353"></div>
<div class="a" style="left:1680px;top:161.5px;width:35.5px;height:35.5px;background:#333;border:1px solid #454545;border-radius:3px"></div>
<svg class="a" style="left:1680px;top:160px" width="120" height="40" viewBox="1680 160 120 40">
<g fill="#e0e0e0"><circle cx="1696" cy="171" r="3.2"/></g>
<g stroke="#e0e0e0" stroke-width="2.8" fill="none" stroke-linecap="round"><path d="M1685 181l7-3 5 1 4-4 5-3 M1697 179l-4 9-2 3 M1697 180l4 6-2 5h6 M1692 190l-4 1"/></g>
<path d="M1724.5 167c7 3 15 3 22 0c0 12-4 24-11 25c-7-1-11-13-11-25z" fill="#e0e0e0"/>
<path d="M1728 176c2-2 4-2 6 0c-2 2-4 2-6 0z M1737 176c2-2 4-2 6 0c-2 2-4 2-6 0z M1729 181c3 5 10 5 13 0c-3 2-10 2-13 0z" fill="#535353"/>
<g fill="none" stroke="#d0d0d0" stroke-width="1.4"><path d="M1773 169v5 M1766 178l7-4 7 4v7l-7 4-7-4z M1766 178l7 4 7-4 M1773 182v7 M1763 189l3-4 M1783 189l-3-4"/></g>
</svg>
<div class="t" style="left:1800px;top:171px;font-size:17px;font-weight:bold;color:#c2c2c2">Body</div>
<div class="a" style="left:1662px;top:204.5px;width:378px;height:1.5px;background:#474747"></div>
<!-- outer scrollbar -->
<div class="a" style="left:2017px;top:206px;width:22px;height:416px;background:#4b4b4b"></div>
<svg class="a" style="left:2022px;top:217px" width="14" height="10" viewBox="0 0 14 10"><path d="M2 8l5-5 5 5" stroke="#bdbdbd" stroke-width="1.3" fill="none"/></svg>
<div class="a" style="left:2020px;top:233px;width:18.5px;height:174px;background:#666"></div>
<svg class="a" style="left:2022px;top:601px" width="14" height="10" viewBox="0 0 14 10"><path d="M2 2l5 5 5-5" stroke="#bdbdbd" stroke-width="1.3" fill="none"/></svg>
<!-- search -->
<svg class="a" style="left:1678px;top:217px" width="26" height="26" viewBox="0 0 26 26"><circle cx="10" cy="10" r="8" fill="none" stroke="#e0e0e0" stroke-width="1.8"/><path d="M10 6v8M6 10h8" stroke="#e0e0e0" stroke-width="1.8"/><path d="M16 16l7 7" stroke="#e0e0e0" stroke-width="2.8"/></svg>
<div class="a" style="left:1711px;top:239px;width:256px;height:1.3px;background:#8a8a8a"></div>
<g></g>
<svg class="a" style="left:1974px;top:218px" width="30" height="22" viewBox="0 0 30 22"><g transform="translate(10.5 10.5)" fill="#e0e0e0"><circle r="5.5"/><rect x="-1.7" y="-8.5" width="3.4" height="17"/><rect x="-8.5" y="-1.7" width="17" height="3.4"/><rect x="-1.7" y="-8.5" width="3.4" height="17" transform="rotate(45)"/><rect x="-1.7" y="-8.5" width="3.4" height="17" transform="rotate(-45)"/><circle r="2.2" fill="#535353"/></g><path d="M21 14h5l-2.5 2.5z" fill="#e0e0e0"/></svg>
<div class="a" style="left:1669px;top:263.5px;width:341px;height:1.5px;background:#464646"></div>
<!-- list -->
<div class="a" style="left:1669px;top:290px;width:341px;height:332px;background:#474747"></div>
<div class="a" style="left:1983px;top:292px;width:26.5px;height:320px;background:#4a4a4a"></div>
<svg class="a" style="left:1989px;top:305px" width="14" height="10" viewBox="0 0 14 10"><path d="M2 8l5-5 5 5" stroke="#bdbdbd" stroke-width="1.3" fill="none"/></svg>
<div class="a" style="left:1986px;top:440px;width:18px;height:76px;background:#666;border-radius:3px"></div>
<svg class="a" style="left:1989px;top:590px" width="14" height="10" viewBox="0 0 14 10"><path d="M2 2l5 5 5-5" stroke="#bdbdbd" stroke-width="1.3" fill="none"/></svg>
<div class="a" style="left:1670px;top:291.5px;width:313px;height:52px;background:#535353;overflow:hidden">
<div class="a" style="left:11px;top:3.5px;width:39px;height:46px;background:linear-gradient(#a8a8a8 0,#b8b8b8 55%,#d0d0d0 55%,#d8d8d8 100%)"></div>
<svg class="a" style="left:11px;top:3.5px" width="39" height="46" viewBox="0 0 39 46"><circle cx="20" cy="9" r="2.8" fill="#2a8a96"/><path d="M17 12h6l1 12-2 4 1 12h-3l-1-10-1 10h-3l1-12-1-4z" fill="#2a8a96"/><path d="M17 13l-3 10 M23 13l3 9" stroke="#2a8a96" stroke-width="2"/><path d="M22 41c3-1 6-3 9-2" stroke="#777" stroke-width="2" opacity="0.6"/></svg>
<div class="t" style="left:65.5px;top:17px;font-size:19.5px;color:#ececec">Reaction To Getting Clipped</div>
</div>
<div class="a" style="left:1670px;top:345.5px;width:313px;height:52px;background:#6a6a6a;overflow:hidden">
<div class="a" style="left:7px;top:2px;width:49px;height:48px;background:#555"></div>
<div class="a" style="left:11px;top:3.5px;width:39px;height:46px;background:linear-gradient(#a8a8a8 0,#b8b8b8 55%,#d0d0d0 55%,#d8d8d8 100%)"></div>
<svg class="a" style="left:11px;top:3.5px" width="39" height="46" viewBox="0 0 39 46"><circle cx="20" cy="9" r="2.8" fill="#c84848"/><path d="M17 12h6l1 12-2 4 1 12h-3l-1-10-1 10h-3l1-12-1-4z" fill="#c84848"/><path d="M17 13l-3 10 M23 13l3 9" stroke="#c84848" stroke-width="2"/><path d="M22 41c3-1 6-3 9-2" stroke="#777" stroke-width="2" opacity="0.6"/></svg>
<div class="t" style="left:65.5px;top:17px;font-size:19.5px;color:#ececec">Pouring And Serving Drinks</div>
</div>
<div class="a" style="left:1670px;top:399.5px;width:313px;height:52px;background:#535353;overflow:hidden">
<div class="a" style="left:11px;top:3.5px;width:39px;height:46px;background:linear-gradient(#a8a8a8 0,#b8b8b8 55%,#d0d0d0 55%,#d8d8d8 100%)"></div>
<svg class="a" style="left:11px;top:3.5px" width="39" height="46" viewBox="0 0 39 46"><circle cx="20" cy="9" r="2.8" fill="#b03030"/><path d="M17 12h6l1 12-2 4 1 12h-3l-1-10-1 10h-3l1-12-1-4z" fill="#b03030"/><path d="M17 13l-3 10 M23 13l3 9" stroke="#b03030" stroke-width="2"/><path d="M22 41c3-1 6-3 9-2" stroke="#777" stroke-width="2" opacity="0.6"/></svg>
<div class="t" style="left:65.5px;top:17px;font-size:19.5px;color:#ececec">Belting Out A Load Roar</div>
</div>
<div class="a" style="left:1670px;top:453.5px;width:313px;height:52px;background:#535353;overflow:hidden">
<div class="a" style="left:11px;top:3.5px;width:39px;height:46px;background:linear-gradient(#a8a8a8 0,#b8b8b8 55%,#d0d0d0 55%,#d8d8d8 100%)"></div>
<svg class="a" style="left:11px;top:3.5px" width="39" height="46" viewBox="0 0 39 46"><circle cx="20" cy="9" r="2.8" fill="#2a8a96"/><path d="M17 12h6l1 12-2 4 1 12h-3l-1-10-1 10h-3l1-12-1-4z" fill="#2a8a96"/><path d="M17 13l-3 10 M23 13l3 9" stroke="#2a8a96" stroke-width="2"/><path d="M22 41c3-1 6-3 9-2" stroke="#777" stroke-width="2" opacity="0.6"/></svg>
<div class="t" style="left:65.5px;top:17px;font-size:19.5px;color:#ececec">Kneeling To Holding Down M</div>
</div>
<div class="a" style="left:1670px;top:507.5px;width:313px;height:52px;background:#535353;overflow:hidden">
<div class="a" style="left:11px;top:3.5px;width:39px;height:46px;background:linear-gradient(#a8a8a8 0,#b8b8b8 55%,#d0d0d0 55%,#d8d8d8 100%)"></div>
<svg class="a" style="left:11px;top:3.5px" width="39" height="46" viewBox="0 0 39 46"><circle cx="20" cy="9" r="2.8" fill="#2a8a96"/><path d="M17 12h6l1 12-2 4 1 12h-3l-1-10-1 10h-3l1-12-1-4z" fill="#2a8a96"/><path d="M17 13l-3 10 M23 13l3 9" stroke="#2a8a96" stroke-width="2"/><path d="M22 41c3-1 6-3 9-2" stroke="#777" stroke-width="2" opacity="0.6"/></svg>
<div class="t" style="left:65.5px;top:17px;font-size:19.5px;color:#ececec">Collecting Dice In Cup And S</div>
</div>
<div class="a" style="left:1670px;top:561.5px;width:313px;height:52px;background:#535353;overflow:hidden">
<div class="a" style="left:11px;top:3.5px;width:39px;height:46px;background:linear-gradient(#a8a8a8 0,#b8b8b8 55%,#d0d0d0 55%,#d8d8d8 100%)"></div>
<svg class="a" style="left:11px;top:3.5px" width="39" height="46" viewBox="0 0 39 46"><circle cx="20" cy="9" r="2.8" fill="#2a8a96"/><path d="M17 12h6l1 12-2 4 1 12h-3l-1-10-1 10h-3l1-12-1-4z" fill="#2a8a96"/><path d="M17 13l-3 10 M23 13l3 9" stroke="#2a8a96" stroke-width="2"/><path d="M22 41c3-1 6-3 9-2" stroke="#777" stroke-width="2" opacity="0.6"/></svg>
<div class="t" style="left:65.5px;top:17px;font-size:19.5px;color:#ececec">Revealing Dice From Under A</div>
</div>
<!-- footer -->
<div class="a" style="left:1662px;top:622px;width:378px;height:1.5px;background:#474747"></div>
<svg class="a" style="left:1926px;top:630px" width="26" height="24" viewBox="0 0 26 24"><rect x="2" y="2" width="21" height="19.5" fill="none" stroke="#e0e0e0" stroke-width="1.8"/><path d="M12.5 6l6 3v6l-6 3-6-3V9z" fill="#e0e0e0"/><path d="M6.5 9l6 3 6-3 M12.5 12v6" stroke="#535353" stroke-width="1.2" fill="none"/></svg>
<svg class="a" style="left:1974px;top:629px" width="22" height="25" viewBox="0 0 22 25"><path d="M3 6h16 M8 6V3.5h6V6 M5 7v15h12V7 M8.3 10v9 M11 10v9 M13.7 10v9" stroke="#8a8a8a" stroke-width="1.6" fill="none"/></svg>

<!-- ===== 3D PANEL ===== -->
<div class="a" style="left:1662px;top:665.5px;width:378px;height:27.5px;background:#424242"></div>
<div class="a" style="left:1662px;top:665.5px;width:46.5px;height:27.5px;background:#535353"></div>
<div class="a" style="left:1708.5px;top:665.5px;width:68px;height:27.5px;background:#484848;border-right:1.5px solid #3e3e3e"></div>
<div class="a" style="left:1778px;top:665.5px;width:90px;height:27.5px;background:#484848;border-right:1.5px solid #3e3e3e"></div>
<div class="t" style="left:1674px;top:673px;font-size:16px;font-weight:bold;color:#eaeaea">3D</div>
<div class="t" style="left:1720px;top:673px;font-size:16px;font-weight:bold;color:#a8a8a8">Layers</div>
<div class="t" style="left:1790px;top:673px;font-size:16px;font-weight:bold;color:#a8a8a8;letter-spacing:-0.2px">Channels</div>
<svg class="a" style="left:2013px;top:673px" width="19" height="14" viewBox="0 0 19 14"><path d="M1 1.5h17M1 5h17M1 8.5h17M1 12h17" stroke="#cfcfcf" stroke-width="1.4"/></svg>
<div class="a" style="left:1662px;top:693px;width:378px;height:508px;background:#535353"></div>
<div class="a" style="left:1776.5px;top:706px;width:35px;height:35px;background:#333;border:1px solid #454545;border-radius:3px"></div>
<svg class="a" style="left:1780px;top:710px" width="140" height="28" viewBox="1780 710 140 28">
<g fill="none" stroke="#e0e0e0" stroke-width="1.6"><rect x="1785" y="715" width="3" height="3"/><path d="M1786.5 718v13h15 M1786.5 724h15 M1788 716.5h13"/><rect x="1793" y="722.5" width="3" height="3" fill="#333"/><rect x="1793" y="729.5" width="3" height="3" fill="#333"/></g>
<g fill="none" stroke="#e0e0e0" stroke-width="1.5"><ellipse cx="1831.5" cy="716.5" rx="7" ry="2.5"/><path d="M1824.5 716.5v13c0 3 14 3 14 0v-13 M1824.5 722h14 M1824.5 726.5h14 M1829 719v12 M1834 719v12"/></g>
<path d="M1862 716c4 2 9 2 13 1c-1 5-1 10 1 15c-4 0-10-1-13-3c-1-4-1-9-1-13z" fill="#bdbdbd"/><path d="M1876 721c2 1 3 3 2 6c-1 1-2 1-3 0z" fill="#e0e0e0"/>
<path d="M1907.5 714c4 0 7 3 7 7c0 3-2 4-3 6v2h-8v-2c-1-2-3-3-3-6c0-4 3-7 7-7z M1904 731h7l-3.5 3z" fill="#e0e0e0"/>
</svg>
<div class="a" style="left:1662px;top:748.5px;width:354px;height:348px;background:#4a4a4a"></div>
<div class="a" style="left:1662px;top:1096.5px;width:378px;height:64.5px;background:#505050"></div>
<div class="a" style="left:2016px;top:748.5px;width:24px;height:412.5px;background:#4c4c4c"></div>
<div class="a" style="left:1662px;top:749.0px;width:354px;height:30.2px;background:#535353"></div>
<div class="a" style="left:1696px;top:749.0px;width:1px;height:30.2px;background:#474747"></div>
<svg class="a" style="left:1669px;top:756.0px" width="23" height="16" viewBox="0 0 23 16"><path d="M1.5 8c3-5 6.5-7 10-7s7 2 10 7c-3 5-6.5 7-10 7s-7-2-10-7z" fill="#8e8e8e"/><circle cx="11.5" cy="8" r="4.2" fill="#535353"/><circle cx="11.5" cy="8" r="2.6" fill="#8e8e8e"/><circle cx="12.6" cy="6.8" r="0.9" fill="#535353"/></svg>
<svg class="a" style="left:1700px;top:752.0px" width="24" height="24" viewBox="0 0 24 24"><g fill="#e0e0e0"><circle cx="10.5" cy="7" r="3"/></g><g stroke="#e0e0e0" stroke-width="1.3"><path d="M10.5 0v2.5 M4 7h2.5 M15 7h2.5 M5 2.5l1.7 1.7 M16 2.5l-1.7 1.7"/></g><path d="M10.5 12v5 M7.5 14.5l3 3 3-3" stroke="#e0e0e0" stroke-width="1.8" fill="none"/><path d="M1 18l9.5-5 9.5 5-9.5 5z M5 18l5.5 3 5.5-3-5.5-3z" fill="#e0e0e0" fill-rule="evenodd"/></svg>
<div class="t" style="left:1735px;top:757.0px;font-size:16px;color:#e6e6e6">Environment</div>
<div class="a" style="left:1662px;top:780.7px;width:354px;height:30.2px;background:#535353"></div>
<div class="a" style="left:1696px;top:780.7px;width:1px;height:30.2px;background:#474747"></div>
<svg class="a" style="left:1669px;top:787.7px" width="23" height="16" viewBox="0 0 23 16"><path d="M1.5 8c3-5 6.5-7 10-7s7 2 10 7c-3 5-6.5 7-10 7s-7-2-10-7z" fill="#8e8e8e"/><circle cx="11.5" cy="8" r="4.2" fill="#535353"/><circle cx="11.5" cy="8" r="2.6" fill="#8e8e8e"/><circle cx="12.6" cy="6.8" r="0.9" fill="#535353"/></svg>
<svg class="a" style="left:1700px;top:784.7px" width="24" height="22" viewBox="0 0 24 22"><g fill="none" stroke="#e0e0e0" stroke-width="1.5"><rect x="1.5" y="2" width="3" height="3"/><path d="M3 5v14h17 M3 10h17 M5 3.5h15"/><rect x="9" y="8.5" width="3" height="3" fill="#535353"/><rect x="9" y="17.5" width="3" height="3" fill="#535353"/></g></svg>
<div class="t" style="left:1735px;top:788.7px;font-size:16px;color:#e6e6e6">Scene</div>
<div class="a" style="left:1662px;top:812.4px;width:354px;height:30.2px;background:#535353"></div>
<div class="a" style="left:1696px;top:812.4px;width:1px;height:30.2px;background:#474747"></div>
<svg class="a" style="left:1669px;top:819.4px" width="23" height="16" viewBox="0 0 23 16"><path d="M1.5 8c3-5 6.5-7 10-7s7 2 10 7c-3 5-6.5 7-10 7s-7-2-10-7z" fill="#8e8e8e"/><circle cx="11.5" cy="8" r="4.2" fill="#535353"/><circle cx="11.5" cy="8" r="2.6" fill="#8e8e8e"/><circle cx="12.6" cy="6.8" r="0.9" fill="#535353"/></svg>
<svg class="a" style="left:1726px;top:820.4px" width="22" height="14" viewBox="0 0 22 14"><path d="M0.5 1.5h15v12h-15z M15.5 6l5.5-4.5v12l-5.5-4.5z" fill="#e0e0e0"/></svg>
<div class="t" style="left:1760px;top:820.4px;font-size:16px;color:#e6e6e6">Current View</div>
<div class="a" style="left:1662px;top:844.1px;width:354px;height:30.2px;background:#535353"></div>
<div class="a" style="left:1696px;top:844.1px;width:1px;height:30.2px;background:#474747"></div>
<svg class="a" style="left:1669px;top:851.1px" width="23" height="16" viewBox="0 0 23 16"><path d="M1.5 8c3-5 6.5-7 10-7s7 2 10 7c-3 5-6.5 7-10 7s-7-2-10-7z" fill="#e4e4e4"/><circle cx="11.5" cy="8" r="4.2" fill="#535353"/><circle cx="11.5" cy="8" r="2.6" fill="#e4e4e4"/><circle cx="12.6" cy="6.8" r="0.9" fill="#535353"/></svg>
<svg class="a" style="left:1726px;top:848.1px" width="22" height="22" viewBox="0 0 22 22"><circle cx="9.5" cy="10" r="4" fill="#e0e0e0"/><g stroke="#e0e0e0" stroke-width="1.5"><path d="M9.5 1v3 M9.5 16v3 M0.5 10h3 M15.5 10h3 M3 3.5l2 2 M14 14.5l2 2 M16 3.5l-2 2 M3 16.5l2-2"/></g><path d="M15 15l5 5 M20 17v3h-3" stroke="#e0e0e0" stroke-width="1.3" fill="none"/></svg>
<div class="t" style="left:1760px;top:852.1px;font-size:16px;color:#e6e6e6">Infinite Light 1</div>
<div class="a" style="left:1662px;top:875.8px;width:354px;height:30.2px;background:#535353"></div>
<div class="a" style="left:1696px;top:875.8px;width:1px;height:30.2px;background:#474747"></div>
<svg class="a" style="left:1669px;top:882.8px" width="23" height="16" viewBox="0 0 23 16"><path d="M1.5 8c3-5 6.5-7 10-7s7 2 10 7c-3 5-6.5 7-10 7s-7-2-10-7z" fill="#8e8e8e"/><circle cx="11.5" cy="8" r="4.2" fill="#535353"/><circle cx="11.5" cy="8" r="2.6" fill="#8e8e8e"/><circle cx="12.6" cy="6.8" r="0.9" fill="#535353"/></svg>
<svg class="a" style="left:1726px;top:883.8px" width="22" height="14" viewBox="0 0 22 14"><path d="M0.5 1.5h15v12h-15z M15.5 6l5.5-4.5v12l-5.5-4.5z" fill="#e0e0e0"/></svg>
<div class="t" style="left:1760px;top:883.8px;font-size:16px;color:#e6e6e6">Default Camera</div>
<div class="a" style="left:1662px;top:907.5px;width:354px;height:30.2px;background:#535353"></div>
<div class="a" style="left:1696px;top:907.5px;width:1px;height:30.2px;background:#474747"></div>
<svg class="a" style="left:1669px;top:914.5px" width="23" height="16" viewBox="0 0 23 16"><path d="M1.5 8c3-5 6.5-7 10-7s7 2 10 7c-3 5-6.5 7-10 7s-7-2-10-7z" fill="#e4e4e4"/><circle cx="11.5" cy="8" r="4.2" fill="#535353"/><circle cx="11.5" cy="8" r="2.6" fill="#e4e4e4"/><circle cx="12.6" cy="6.8" r="0.9" fill="#535353"/></svg>
<div class="a" style="left:1748px;top:910.5px;width:268px;height:26.5px;background:#6a6a6a"></div>
<svg class="a" style="left:1704px;top:917.5px" width="16" height="10" viewBox="0 0 16 10"><path d="M2 2l6 6 6-6" stroke="#d8d8d8" stroke-width="1.4" fill="none"/></svg>
<svg class="a" style="left:1725px;top:911.5px" width="22" height="22" viewBox="0 0 22 22"><g fill="#e0e0e0"><circle cx="17" cy="3.5" r="3"/><circle cx="19" cy="6" r="3"/><circle cx="3.5" cy="17" r="3"/><circle cx="6" cy="19" r="3"/><path d="M5 15l10-10 2.5 2.5-10 10z"/></g></svg>
<div class="t" style="left:1760px;top:915.5px;font-size:16px;color:#e6e6e6">Tops_Skeleton</div>
<div class="a" style="left:1662px;top:939.2px;width:354px;height:30.2px;background:#535353"></div>
<div class="a" style="left:1696px;top:939.2px;width:1px;height:30.2px;background:#474747"></div>
<svg class="a" style="left:1669px;top:946.2px" width="23" height="16" viewBox="0 0 23 16"><path d="M1.5 8c3-5 6.5-7 10-7s7 2 10 7c-3 5-6.5 7-10 7s-7-2-10-7z" fill="#e4e4e4"/><circle cx="11.5" cy="8" r="4.2" fill="#535353"/><circle cx="11.5" cy="8" r="2.6" fill="#e4e4e4"/><circle cx="12.6" cy="6.8" r="0.9" fill="#535353"/></svg>
<svg class="a" style="left:1753px;top:944.2px" width="19" height="20" viewBox="0 0 19 20"><defs><pattern id="mp6" width="2" height="2" patternUnits="userSpaceOnUse"><rect width="1" height="1" fill="#e0e0e0"/><rect x="1" y="1" width="1" height="1" fill="#e0e0e0"/></pattern></defs><path d="M1.5 3c3 1.5 7 2 10 1c-1 4-.5 9 1 14c-4 0-8-1-10.5-3c-1-4-1-8-.5-12z" fill="url(#mp6)" stroke="#e0e0e0" stroke-width="1"/><path d="M3 1l3 3 M9 1l-1 3" stroke="#e0e0e0" stroke-width="1"/><path d="M13.5 8c2 1 3 3 2.5 5.5c-.5 1-1.5 1-2.5.5z" fill="#e0e0e0"/></svg>
<div class="t" style="left:1786px;top:947.2px;font-size:16px;color:#e6e6e6">Bodymat</div>
<div class="a" style="left:1662px;top:970.9px;width:354px;height:30.2px;background:#535353"></div>
<div class="a" style="left:1696px;top:970.9px;width:1px;height:30.2px;background:#474747"></div>
<svg class="a" style="left:1669px;top:977.9px" width="23" height="16" viewBox="0 0 23 16"><path d="M1.5 8c3-5 6.5-7 10-7s7 2 10 7c-3 5-6.5 7-10 7s-7-2-10-7z" fill="#e4e4e4"/><circle cx="11.5" cy="8" r="4.2" fill="#535353"/><circle cx="11.5" cy="8" r="2.6" fill="#e4e4e4"/><circle cx="12.6" cy="6.8" r="0.9" fill="#535353"/></svg>
<svg class="a" style="left:1753px;top:975.9px" width="19" height="20" viewBox="0 0 19 20"><defs><pattern id="mp7" width="2" height="2" patternUnits="userSpaceOnUse"><rect width="1" height="1" fill="#e0e0e0"/><rect x="1" y="1" width="1" height="1" fill="#e0e0e0"/></pattern></defs><path d="M1.5 3c3 1.5 7 2 10 1c-1 4-.5 9 1 14c-4 0-8-1-10.5-3c-1-4-1-8-.5-12z" fill="url(#mp7)" stroke="#e0e0e0" stroke-width="1"/><path d="M3 1l3 3 M9 1l-1 3" stroke="#e0e0e0" stroke-width="1"/><path d="M13.5 8c2 1 3 3 2.5 5.5c-.5 1-1.5 1-2.5.5z" fill="#e0e0e0"/></svg>
<div class="t" style="left:1786px;top:978.9px;font-size:16px;color:#e6e6e6">Hairmat</div>
<div class="a" style="left:1662px;top:1002.6px;width:354px;height:30.2px;background:#535353"></div>
<div class="a" style="left:1696px;top:1002.6px;width:1px;height:30.2px;background:#474747"></div>
<svg class="a" style="left:1669px;top:1009.6px" width="23" height="16" viewBox="0 0 23 16"><path d="M1.5 8c3-5 6.5-7 10-7s7 2 10 7c-3 5-6.5 7-10 7s-7-2-10-7z" fill="#e4e4e4"/><circle cx="11.5" cy="8" r="4.2" fill="#535353"/><circle cx="11.5" cy="8" r="2.6" fill="#e4e4e4"/><circle cx="12.6" cy="6.8" r="0.9" fill="#535353"/></svg>
<svg class="a" style="left:1753px;top:1007.6px" width="19" height="20" viewBox="0 0 19 20"><defs><pattern id="mp8" width="2" height="2" patternUnits="userSpaceOnUse"><rect width="1" height="1" fill="#e0e0e0"/><rect x="1" y="1" width="1" height="1" fill="#e0e0e0"/></pattern></defs><path d="M1.5 3c3 1.5 7 2 10 1c-1 4-.5 9 1 14c-4 0-8-1-10.5-3c-1-4-1-8-.5-12z" fill="url(#mp8)" stroke="#e0e0e0" stroke-width="1"/><path d="M3 1l3 3 M9 1l-1 3" stroke="#e0e0e0" stroke-width="1"/><path d="M13.5 8c2 1 3 3 2.5 5.5c-.5 1-1.5 1-2.5.5z" fill="#e0e0e0"/></svg>
<div class="t" style="left:1786px;top:1010.6px;font-size:16px;color:#e6e6e6">Shoesmat</div>
<div class="a" style="left:1662px;top:1034.3px;width:354px;height:30.2px;background:#535353"></div>
<div class="a" style="left:1696px;top:1034.3px;width:1px;height:30.2px;background:#474747"></div>
<svg class="a" style="left:1669px;top:1041.3px" width="23" height="16" viewBox="0 0 23 16"><path d="M1.5 8c3-5 6.5-7 10-7s7 2 10 7c-3 5-6.5 7-10 7s-7-2-10-7z" fill="#e4e4e4"/><circle cx="11.5" cy="8" r="4.2" fill="#535353"/><circle cx="11.5" cy="8" r="2.6" fill="#e4e4e4"/><circle cx="12.6" cy="6.8" r="0.9" fill="#535353"/></svg>
<svg class="a" style="left:1753px;top:1039.3px" width="19" height="20" viewBox="0 0 19 20"><defs><pattern id="mp9" width="2" height="2" patternUnits="userSpaceOnUse"><rect width="1" height="1" fill="#e0e0e0"/><rect x="1" y="1" width="1" height="1" fill="#e0e0e0"/></pattern></defs><path d="M1.5 3c3 1.5 7 2 10 1c-1 4-.5 9 1 14c-4 0-8-1-10.5-3c-1-4-1-8-.5-12z" fill="url(#mp9)" stroke="#e0e0e0" stroke-width="1"/><path d="M3 1l3 3 M9 1l-1 3" stroke="#e0e0e0" stroke-width="1"/><path d="M13.5 8c2 1 3 3 2.5 5.5c-.5 1-1.5 1-2.5.5z" fill="#e0e0e0"/></svg>
<div class="t" style="left:1786px;top:1042.3px;font-size:16px;color:#e6e6e6">Bottommat</div>
<div class="a" style="left:1662px;top:1066.0px;width:354px;height:30.2px;background:#535353"></div>
<div class="a" style="left:1696px;top:1066.0px;width:1px;height:30.2px;background:#474747"></div>
<svg class="a" style="left:1669px;top:1073.0px" width="23" height="16" viewBox="0 0 23 16"><path d="M1.5 8c3-5 6.5-7 10-7s7 2 10 7c-3 5-6.5 7-10 7s-7-2-10-7z" fill="#e4e4e4"/><circle cx="11.5" cy="8" r="4.2" fill="#535353"/><circle cx="11.5" cy="8" r="2.6" fill="#e4e4e4"/><circle cx="12.6" cy="6.8" r="0.9" fill="#535353"/></svg>
<svg class="a" style="left:1753px;top:1071.0px" width="19" height="20" viewBox="0 0 19 20"><defs><pattern id="mp10" width="2" height="2" patternUnits="userSpaceOnUse"><rect width="1" height="1" fill="#e0e0e0"/><rect x="1" y="1" width="1" height="1" fill="#e0e0e0"/></pattern></defs><path d="M1.5 3c3 1.5 7 2 10 1c-1 4-.5 9 1 14c-4 0-8-1-10.5-3c-1-4-1-8-.5-12z" fill="url(#mp10)" stroke="#e0e0e0" stroke-width="1"/><path d="M3 1l3 3 M9 1l-1 3" stroke="#e0e0e0" stroke-width="1"/><path d="M13.5 8c2 1 3 3 2.5 5.5c-.5 1-1.5 1-2.5.5z" fill="#e0e0e0"/></svg>
<div class="t" style="left:1786px;top:1074.0px;font-size:16px;color:#e6e6e6">Topmat</div>
<div class="a" style="left:1662px;top:1161px;width:378px;height:1.5px;background:#474747"></div>
<svg class="a" style="left:1750px;top:1168px" width="256" height="34" viewBox="1750 1168 256 34">
<g fill="none" stroke="#e0e0e0" stroke-width="1.5"><ellipse cx="1762" cy="1174.5" rx="6.5" ry="2.3"/><path d="M1755.5 1174.5v12c0 3 13 3 13 0v-12 M1755.5 1179h13 M1755.5 1183.5h13 M1759.5 1177v11 M1764.5 1177v11"/></g>
<path d="M1775 1196h6l-3 3z" fill="#e8e8e8"/>
<path d="M1806.5 1172c3.7 0 6.5 2.8 6.5 6.5c0 2.8-2 4-2.7 5.5v2h-7.6v-2c-.7-1.5-2.7-2.7-2.7-5.5c0-3.7 2.8-6.5 6.5-6.5z M1803 1187.5h7l-3.5 2.5z" fill="#e0e0e0"/>
<path d="M1820.5 1196h6l-3 3z" fill="#e8e8e8"/>
<rect x="1842.5" y="1172.5" width="20" height="18.5" fill="none" stroke="#e0e0e0" stroke-width="1.8"/><path d="M1852.5 1176l5.5 2.8v5.6l-5.5 2.8-5.5-2.8v-5.6z" fill="#e0e0e0"/><path d="M1847 1178.8l5.5 2.8 5.5-2.8 M1852.5 1181.6v5.6" stroke="#535353" stroke-width="1.1" fill="none"/>
<path d="M1897 1171h4v3h-1v7l-1 3-1-3v-7h-1z M1889 1184h8v3h12v3h-20z" fill="#e0e0e0"/><rect x="1889" y="1184" width="8" height="3" fill="#e0e0e0"/>
<path d="M1943 1171h4v3h-1v7l-1 3-1-3v-7h-1z M1935 1184h8v3h4v3h-12z" fill="#9a9a9a"/><circle cx="1952" cy="1186" r="4" fill="none" stroke="#9a9a9a" stroke-width="1.3"/><path d="M1950 1184l4 4M1954 1184l-4 4" stroke="#9a9a9a" stroke-width="1.1"/>
<path d="M1982 1175h17 M1987 1175v-2.5h7v2.5 M1984 1176v15h13v-15 M1988 1179v9 M1991.5 1179v9 M1995 1179v9" stroke="#e0e0e0" stroke-width="1.8" fill="none"/>
</svg>

<!--/SEC6-->
<!--BOTTOMBAND-->
<div class="a" style="left:0;top:1202px;width:2048px;height:2px;background:#3c3c3c"></div>
<div class="a" style="left:0;top:1204px;width:2048px;height:4.5px;background:#535353"></div>
<div class="a" style="left:0;top:1208.5px;width:2048px;height:1.5px;background:#3a3a3a"></div>
<div class="a" style="left:2040px;top:105px;width:1.5px;height:1099px;background:#383838"></div>
<div class="a" style="left:2041.5px;top:105px;width:6.5px;height:1099px;background:#535353"></div>
<div class="a" style="left:2046.5px;top:0;width:1.5px;height:1210px;background:#3a3a3a"></div>
</body></html>
